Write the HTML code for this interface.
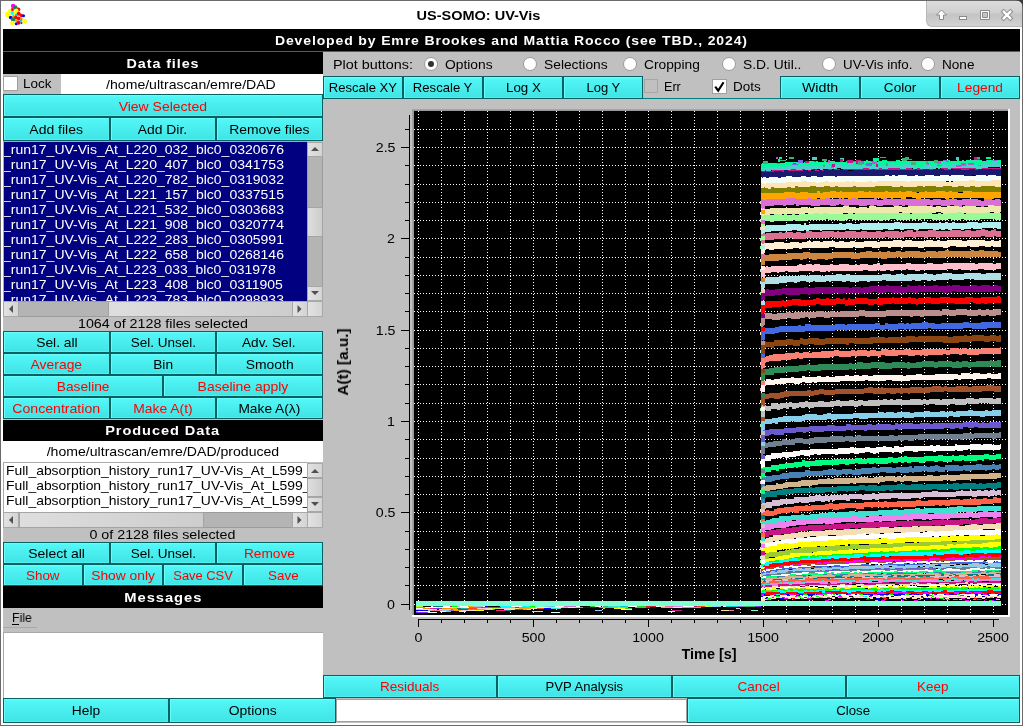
<!DOCTYPE html><html><head><meta charset="utf-8"><style>
html,body{margin:0;padding:0;width:1023px;height:726px;overflow:hidden;background:#c0c0c0}
body>div,body>svg{position:absolute}
.t{position:absolute;white-space:nowrap;line-height:1;will-change:transform;font-family:"Liberation Sans",sans-serif}
.sb{position:absolute;box-sizing:border-box;background:#b4b4b4;border:1px solid #9c9c9c}
.sbb{position:absolute;box-sizing:border-box;background:linear-gradient(90deg,#e2e2e2,#d4d4d4);border:1px solid #a8a8a8}
.sbh{position:absolute;box-sizing:border-box;background:linear-gradient(90deg,#dedede,#cdcdcd);border:1px solid #a4a4a4}
.b{position:absolute;box-sizing:border-box;border:1px solid #066262;border-radius:0;background:linear-gradient(#5cfafa,#52f5f5 12%,#40e5e5 92%);box-shadow:inset 1px 1px 0 #68fdfd,inset -1px -1px 0 #50eeee}
</style></head><body>
<div class="" style="left:0px;top:0px;width:1023px;height:726px;background:#fff"></div>
<div class="" style="left:0px;top:0px;width:1023px;height:1px;background:#6a6a6a"></div>
<div class="" style="left:0px;top:0px;width:1px;height:726px;background:#6a6a6a"></div>
<div class="" style="left:1022px;top:0px;width:1px;height:726px;background:#6a6a6a"></div>
<div class="" style="left:0px;top:725px;width:1023px;height:1px;background:#6a6a6a"></div>
<div class="" style="left:3px;top:29px;width:1017px;height:694px;background:#c0c0c0"></div>
<div class="t" style="left:419.61px;top:9.00px;font-size:13.7px;font-weight:bold;color:#000;transform:scaleX(1.0595);transform-origin:center;letter-spacing:0px;">US-SOMO: UV-Vis</div>
<svg style="left:0;top:0" width="30" height="30"><circle cx="13.1" cy="6.1" r="2.24" fill="#ff00ff"/><circle cx="15.3" cy="7.6" r="2.24" fill="#1f7f4f"/><circle cx="18.3" cy="9.5" r="2.01" fill="#ff0000"/><circle cx="12.2" cy="9.7" r="1.65" fill="#ff0000"/><circle cx="9.9" cy="10.8" r="1.77" fill="#ffff00"/><circle cx="16.5" cy="10.4" r="2.01" fill="#ffff00"/><circle cx="12.4" cy="12.9" r="2.01" fill="#00ffff"/><circle cx="7.9" cy="14.4" r="2.71" fill="#ffff00"/><circle cx="15.4" cy="13.3" r="1.77" fill="#ffff00"/><circle cx="18.7" cy="13.8" r="2.01" fill="#ff0000"/><circle cx="21.4" cy="15.6" r="1.77" fill="#ff0000"/><circle cx="23.5" cy="15.8" r="1.53" fill="#0000ff"/><circle cx="16.3" cy="15.4" r="1.53" fill="#00cccc"/><circle cx="13.5" cy="16.2" r="1.30" fill="#ff8c00"/><circle cx="10.6" cy="17.6" r="1.77" fill="#0000ff"/><circle cx="15.8" cy="17.4" r="1.77" fill="#ff0000"/><circle cx="18.7" cy="18.5" r="2.01" fill="#ff0000"/><circle cx="13.1" cy="19.6" r="2.24" fill="#1f7f4f"/><circle cx="21.5" cy="18.7" r="1.30" fill="#ff8c00"/><circle cx="21" cy="20.6" r="1.30" fill="#00cccc"/><circle cx="24.6" cy="21.5" r="2.48" fill="#ffff00"/><circle cx="16.3" cy="20.6" r="1.30" fill="#ff8c00"/><circle cx="12.4" cy="23.1" r="2.24" fill="#ffff00"/><circle cx="16.3" cy="23.7" r="1.53" fill="#0000ff"/><circle cx="18.5" cy="22.8" r="2.01" fill="#ff0000"/><circle cx="21.4" cy="23.1" r="1.06" fill="#3333ff"/><path d="M0 4 A4 4 0 0 1 4 0 H0Z" fill="#6a6a6a"/></svg>
<div style="left:926px;top:1px;width:96px;height:26px;border-bottom-left-radius:6px;border-top-right-radius:5px;background:linear-gradient(#dcdcdc,#d0d0d0 45%,#c4c4c4 55%,#d2d2d2);border-left:1px solid #b8b8b8;border-bottom:1px solid #b8b8b8;box-sizing:border-box"></div>
<svg style="left:926px;top:0px" width="97" height="28" viewBox="926 0 97 28">
<g fill="#fff" stroke="#8a8a8a" stroke-width="1">
<path d="M941.5 10 L946.5 15 L943.5 15 L943.5 19.5 L939.5 19.5 L939.5 15 L936.5 15 Z"/>
<rect x="959.5" y="16.5" width="7" height="3"/>
<path fill-rule="evenodd" d="M980.5 10.5 H989.5 V19.5 H980.5 Z M982.5 12.5 V17.5 H987.5 V12.5 Z"/>
</g><path d="M1002.2 10.2 L1011.8 19.8 M1011.8 10.2 L1002.2 19.8" stroke="#8a8a8a" stroke-width="4.2"/><path d="M1002.9 10.9 L1011.1 19.1 M1011.1 10.9 L1002.9 19.1" stroke="#fff" stroke-width="2.4"/><g>
</g></svg>
<svg style="left:1015px;top:0" width="8" height="8"><path d="M0 0 H8 V8 A8 8 0 0 0 0 0 Z" fill="#3a3a3a"/></svg>
<div class="" style="left:3px;top:29px;width:1017px;height:22px;background:#000"></div>
<div class="" style="left:3px;top:51px;width:1017px;height:1px;background:#008080"></div>
<div class="t" style="left:291.62px;top:34.00px;font-size:13px;font-weight:bold;color:#fff;transform:scaleX(1.0777);transform-origin:center;letter-spacing:0.8px;">Developed by Emre Brookes and Mattia Rocco (see TBD., 2024)</div>
<div class="" style="left:3px;top:52px;width:320px;height:22px;background:#000"></div>
<div class="t" style="left:130.99px;top:57.83px;font-size:12.6px;font-weight:bold;color:#fff;transform:scaleX(1.1388);transform-origin:center;letter-spacing:0.8px;">Data files</div>
<div class="" style="left:3px;top:76px;width:15px;height:15px;background:#fff;border:1px solid #a0a0a0;box-sizing:border-box"></div>
<div class="t" style="left:23.00px;top:78.33px;font-size:12.6px;color:#000;transform:scaleX(1.0723);transform-origin:left;letter-spacing:0px;">Lock</div>
<div class="" style="left:61px;top:74px;width:262px;height:20px;background:#fff"></div>
<div class="t" style="left:115.02px;top:79.33px;font-size:12.6px;color:#000;transform:scaleX(1.1171);transform-origin:center;letter-spacing:0px;">/home/ultrascan/emre/DAD</div>
<div class="b" style="left:3px;top:94px;width:320px;height:23px"></div>
<div class="t" style="left:123.08px;top:101.33px;font-size:12.6px;color:#ff0000;transform:scaleX(1.1096);transform-origin:center;letter-spacing:0px;">View Selected</div>
<div class="b" style="left:3px;top:117px;width:107px;height:24px"></div>
<div class="t" style="left:32.34px;top:123.83px;font-size:12.6px;color:#000;transform:scaleX(1.1091);transform-origin:center;letter-spacing:0px;">Add files</div>
<div class="b" style="left:110px;top:117px;width:106px;height:24px"></div>
<div class="t" style="left:140.24px;top:123.83px;font-size:12.6px;color:#000;transform:scaleX(1.1047);transform-origin:center;letter-spacing:0px;">Add Dir.</div>
<div class="b" style="left:216px;top:117px;width:107px;height:24px"></div>
<div class="t" style="left:233.09px;top:123.83px;font-size:12.6px;color:#000;transform:scaleX(1.1025);transform-origin:center;letter-spacing:0px;">Remove files</div>
<div class="" style="left:3px;top:141px;width:320px;height:176px;background:#c0c0c0"></div>
<div class="" style="left:3px;top:141px;width:304px;height:160px;background:#000080;border-top:1px solid #a8a8a8;border-left:1px solid #a8a8a8;box-sizing:border-box"></div>
<div style="left:4px;top:142px;width:303px;height:159px;overflow:hidden">
<div class="t" style="left:-8.20px;top:2.33px;font-size:12.6px;color:#fff;transform:scaleX(1.1123);transform-origin:left;letter-spacing:0px;">y_run17_UV-Vis_At_L220_032_blc0_0320676</div>
<div class="t" style="left:-8.20px;top:17.33px;font-size:12.6px;color:#fff;transform:scaleX(1.1123);transform-origin:left;letter-spacing:0px;">y_run17_UV-Vis_At_L220_407_blc0_0341753</div>
<div class="t" style="left:-8.20px;top:32.33px;font-size:12.6px;color:#fff;transform:scaleX(1.1123);transform-origin:left;letter-spacing:0px;">y_run17_UV-Vis_At_L220_782_blc0_0319032</div>
<div class="t" style="left:-8.20px;top:47.33px;font-size:12.6px;color:#fff;transform:scaleX(1.1123);transform-origin:left;letter-spacing:0px;">y_run17_UV-Vis_At_L221_157_blc0_0337515</div>
<div class="t" style="left:-8.20px;top:62.33px;font-size:12.6px;color:#fff;transform:scaleX(1.1123);transform-origin:left;letter-spacing:0px;">y_run17_UV-Vis_At_L221_532_blc0_0303683</div>
<div class="t" style="left:-8.20px;top:77.33px;font-size:12.6px;color:#fff;transform:scaleX(1.1123);transform-origin:left;letter-spacing:0px;">y_run17_UV-Vis_At_L221_908_blc0_0320774</div>
<div class="t" style="left:-8.20px;top:92.33px;font-size:12.6px;color:#fff;transform:scaleX(1.1123);transform-origin:left;letter-spacing:0px;">y_run17_UV-Vis_At_L222_283_blc0_0305991</div>
<div class="t" style="left:-8.20px;top:107.33px;font-size:12.6px;color:#fff;transform:scaleX(1.1123);transform-origin:left;letter-spacing:0px;">y_run17_UV-Vis_At_L222_658_blc0_0268146</div>
<div class="t" style="left:-8.20px;top:122.33px;font-size:12.6px;color:#fff;transform:scaleX(1.1105);transform-origin:left;letter-spacing:0px;">y_run17_UV-Vis_At_L223_033_blc0_031978</div>
<div class="t" style="left:-8.20px;top:137.33px;font-size:12.6px;color:#fff;transform:scaleX(1.1123);transform-origin:left;letter-spacing:0px;">y_run17_UV-Vis_At_L223_408_blc0_0311905</div>
<div class="t" style="left:-8.20px;top:152.33px;font-size:12.6px;color:#fff;transform:scaleX(1.1123);transform-origin:left;letter-spacing:0px;">y_run17_UV-Vis_At_L223_783_blc0_0298933</div>
</div>
<div class="sb" style="left:307px;top:142px;width:16px;height:159px"></div>
<div class="sbb" style="left:307px;top:142px;width:16px;height:15px"></div>
<div class="sbb" style="left:307px;top:286px;width:16px;height:15px"></div>
<div class="sbh" style="left:307px;top:207px;width:16px;height:30px"></div>
<svg style="left:307px;top:142px" width="16" height="159"><path d="M4 9 L8 5 L12 9 Z" fill="#505050"/><path d="M4 149 L8 153 L12 149 Z" fill="#505050"/></svg>
<div class="sb" style="left:3px;top:301px;width:304px;height:16px"></div>
<div class="sbb" style="left:3px;top:301px;width:16px;height:16px"></div>
<div class="sbh" style="left:108px;top:301px;width:185px;height:16px"></div>
<div class="sbb" style="left:292px;top:301px;width:16px;height:16px"></div>
<div class="sbb" style="left:307px;top:301px;width:16px;height:16px"></div>
<svg style="left:3px;top:301px" width="305" height="16"><path d="M10 4 L6 8 L10 12 Z" fill="#505050"/><path d="M294.5 4 L298.5 8 L294.5 12 Z" fill="#505050"/></svg>
<div class="t" style="left:87.55px;top:318.33px;font-size:12.6px;color:#000;transform:scaleX(1.1340);transform-origin:center;letter-spacing:0px;">1064 of 2128 files selected</div>
<div class="b" style="left:3px;top:331px;width:107px;height:22px"></div>
<div class="t" style="left:37.59px;top:336.83px;font-size:12.6px;color:#000;transform:scaleX(1.0943);transform-origin:center;letter-spacing:0px;">Sel. all</div>
<div class="b" style="left:110px;top:331px;width:106px;height:22px"></div>
<div class="t" style="left:132.54px;top:336.83px;font-size:12.6px;color:#000;transform:scaleX(1.0725);transform-origin:center;letter-spacing:0px;">Sel. Unsel.</div>
<div class="b" style="left:216px;top:331px;width:107px;height:22px"></div>
<div class="t" style="left:244.29px;top:336.83px;font-size:12.6px;color:#000;transform:scaleX(1.0818);transform-origin:center;letter-spacing:0px;">Adv. Sel.</div>
<div class="b" style="left:3px;top:353px;width:107px;height:22px"></div>
<div class="t" style="left:33.03px;top:358.83px;font-size:12.6px;color:#ff0000;transform:scaleX(1.1023);transform-origin:center;letter-spacing:0px;">Average</div>
<div class="b" style="left:110px;top:353px;width:106px;height:22px"></div>
<div class="t" style="left:153.89px;top:358.83px;font-size:12.6px;color:#000;transform:scaleX(1.0896);transform-origin:center;letter-spacing:0px;">Bin</div>
<div class="b" style="left:216px;top:353px;width:107px;height:22px"></div>
<div class="t" style="left:247.79px;top:358.83px;font-size:12.6px;color:#000;transform:scaleX(1.1036);transform-origin:center;letter-spacing:0px;">Smooth</div>
<div class="b" style="left:3px;top:375px;width:160px;height:22px"></div>
<div class="t" style="left:58.83px;top:380.83px;font-size:12.6px;color:#ff0000;transform:scaleX(1.0895);transform-origin:center;letter-spacing:0px;">Baseline</div>
<div class="b" style="left:163px;top:375px;width:160px;height:22px"></div>
<div class="t" style="left:202.02px;top:380.83px;font-size:12.6px;color:#ff0000;transform:scaleX(1.1077);transform-origin:center;letter-spacing:0px;">Baseline apply</div>
<div class="b" style="left:3px;top:397px;width:107px;height:22px"></div>
<div class="t" style="left:17.28px;top:402.83px;font-size:12.6px;color:#ff0000;transform:scaleX(1.1200);transform-origin:center;letter-spacing:0px;">Concentration</div>
<div class="b" style="left:110px;top:397px;width:106px;height:22px"></div>
<div class="t" style="left:135.70px;top:402.83px;font-size:12.6px;color:#ff0000;transform:scaleX(1.1018);transform-origin:center;letter-spacing:0px;">Make A(t)</div>
<div class="b" style="left:216px;top:397px;width:107px;height:22px"></div>
<div class="t" style="left:240.80px;top:402.83px;font-size:12.6px;color:#000;transform:scaleX(1.0912);transform-origin:center;letter-spacing:0px;">Make A(λ)</div>
<div class="" style="left:3px;top:420px;width:320px;height:21px;background:#000"></div>
<div class="t" style="left:113.34px;top:425.33px;font-size:12.6px;font-weight:bold;color:#fff;transform:scaleX(1.1571);transform-origin:center;letter-spacing:0.8px;">Produced Data</div>
<div class="" style="left:3px;top:441px;width:320px;height:21px;background:#fff"></div>
<div class="t" style="left:59.00px;top:446.33px;font-size:12.6px;color:#000;transform:scaleX(1.1184);transform-origin:center;letter-spacing:0px;">/home/ultrascan/emre/DAD/produced</div>
<div class="" style="left:3px;top:462px;width:320px;height:65px;background:#c0c0c0"></div>
<div class="" style="left:3px;top:462px;width:304px;height:50px;background:#fff;border-top:1px solid #a8a8a8;border-left:1px solid #a8a8a8;box-sizing:border-box"></div>
<div style="left:4px;top:463px;width:303px;height:49px;overflow:hidden">
<div class="t" style="left:2.20px;top:2.33px;font-size:12.6px;color:#000;transform:scaleX(1.1045);transform-origin:left;letter-spacing:0px;">Full_absorption_history_run17_UV-Vis_At_L599_</div>
<div class="t" style="left:2.20px;top:17.33px;font-size:12.6px;color:#000;transform:scaleX(1.1045);transform-origin:left;letter-spacing:0px;">Full_absorption_history_run17_UV-Vis_At_L599_</div>
<div class="t" style="left:2.20px;top:32.33px;font-size:12.6px;color:#000;transform:scaleX(1.1045);transform-origin:left;letter-spacing:0px;">Full_absorption_history_run17_UV-Vis_At_L599_</div>
</div>
<div class="sb" style="left:307px;top:463px;width:16px;height:49px"></div>
<div class="sbb" style="left:307px;top:463px;width:16px;height:15px"></div>
<div class="sbb" style="left:307px;top:497px;width:16px;height:15px"></div>
<div class="sbh" style="left:307px;top:478px;width:16px;height:19px"></div>
<svg style="left:307px;top:463px" width="16" height="49"><path d="M4 10 L8 6 L12 10 Z" fill="#505050"/><path d="M4 39 L8 43 L12 39 Z" fill="#505050"/></svg>
<div class="sb" style="left:3px;top:512px;width:304px;height:16px"></div>
<div class="sbb" style="left:3px;top:512px;width:16px;height:16px"></div>
<div class="sbh" style="left:19px;top:512px;width:185px;height:16px"></div>
<div class="sbb" style="left:292px;top:512px;width:16px;height:16px"></div>
<div class="sbb" style="left:307px;top:512px;width:16px;height:16px"></div>
<svg style="left:3px;top:512px" width="305" height="16"><path d="M10 4 L6 8 L10 12 Z" fill="#505050"/><path d="M294.5 4 L298.5 8 L294.5 12 Z" fill="#505050"/></svg>
<div class="t" style="left:98.06px;top:529.33px;font-size:12.6px;color:#000;transform:scaleX(1.1328);transform-origin:center;letter-spacing:0px;">0 of 2128 files selected</div>
<div class="b" style="left:3px;top:542px;width:107px;height:22px"></div>
<div class="t" style="left:30.94px;top:547.83px;font-size:12.6px;color:#000;transform:scaleX(1.1105);transform-origin:center;letter-spacing:0px;">Select all</div>
<div class="b" style="left:110px;top:542px;width:106px;height:22px"></div>
<div class="t" style="left:132.54px;top:547.83px;font-size:12.6px;color:#000;transform:scaleX(1.0725);transform-origin:center;letter-spacing:0px;">Sel. Unsel.</div>
<div class="b" style="left:216px;top:542px;width:107px;height:22px"></div>
<div class="t" style="left:246.04px;top:547.83px;font-size:12.6px;color:#ff0000;transform:scaleX(1.0861);transform-origin:center;letter-spacing:0px;">Remove</div>
<div class="b" style="left:3px;top:564px;width:80px;height:22px"></div>
<div class="t" style="left:27.24px;top:569.83px;font-size:12.6px;color:#ff0000;transform:scaleX(1.0633);transform-origin:center;letter-spacing:0px;">Show</div>
<div class="b" style="left:83px;top:564px;width:80px;height:22px"></div>
<div class="t" style="left:93.93px;top:569.83px;font-size:12.6px;color:#ff0000;transform:scaleX(1.0963);transform-origin:center;letter-spacing:0px;">Show only</div>
<div class="b" style="left:163px;top:564px;width:80px;height:22px"></div>
<div class="t" style="left:173.94px;top:569.83px;font-size:12.6px;color:#ff0000;transform:scaleX(1.0234);transform-origin:center;letter-spacing:0px;">Save CSV</div>
<div class="b" style="left:243px;top:564px;width:80px;height:22px"></div>
<div class="t" style="left:268.64px;top:569.83px;font-size:12.6px;color:#ff0000;transform:scaleX(1.0615);transform-origin:center;letter-spacing:0px;">Save</div>
<div class="" style="left:3px;top:586px;width:320px;height:22px;background:#000"></div>
<div class="t" style="left:129.68px;top:591.83px;font-size:12.6px;font-weight:bold;color:#fff;transform:scaleX(1.1695);transform-origin:center;letter-spacing:0.8px;">Messages</div>
<div class="t" style="left:12.30px;top:612.33px;font-size:12.6px;color:#000;transform:scaleX(0.9752);transform-origin:left;letter-spacing:0px;">File</div>
<div class="" style="left:12px;top:624px;width:7px;height:1px;background:#000"></div>
<div class="" style="left:3px;top:627px;width:34px;height:1px;background:#a9a9a9"></div>
<div class="" style="left:3px;top:632px;width:320px;height:66px;background:#fff;border:1px solid #a8a8a8;border-right:none;border-bottom:none;box-sizing:border-box"></div>
<div class="b" style="left:3px;top:698px;width:166px;height:25px"></div>
<div class="t" style="left:73.04px;top:705.33px;font-size:12.6px;color:#000;transform:scaleX(1.0927);transform-origin:center;letter-spacing:0px;">Help</div>
<div class="b" style="left:169px;top:698px;width:167px;height:25px"></div>
<div class="t" style="left:230.79px;top:705.33px;font-size:12.6px;color:#000;transform:scaleX(1.1036);transform-origin:center;letter-spacing:0px;">Options</div>
<div class="" style="left:336px;top:699px;width:351px;height:23px;background:#fff;border:1px solid #a0a0a0;box-sizing:border-box"></div>
<div class="b" style="left:687px;top:698px;width:333px;height:25px"></div>
<div class="t" style="left:837.39px;top:705.33px;font-size:12.6px;color:#000;transform:scaleX(1.0503);transform-origin:center;letter-spacing:0px;">Close</div>
<div class="t" style="left:332.50px;top:59.33px;font-size:12.6px;color:#000;transform:scaleX(1.1421);transform-origin:left;letter-spacing:0px;">Plot buttons:</div>
<svg style="left:422.5px;top:56px" width="16" height="16"><circle cx="8" cy="8" r="6.5" fill="#fff" stroke="#9a9a9a" stroke-width="1"/><circle cx="8" cy="8" r="3" fill="#333"/></svg>
<div class="t" style="left:445.00px;top:59.33px;font-size:12.6px;color:#000;transform:scaleX(1.0962);transform-origin:left;letter-spacing:0px;">Options</div>
<svg style="left:522px;top:56px" width="16" height="16"><circle cx="8" cy="8" r="6.5" fill="#fff" stroke="#9a9a9a" stroke-width="1"/></svg>
<div class="t" style="left:544.00px;top:59.33px;font-size:12.6px;color:#000;transform:scaleX(1.0959);transform-origin:left;letter-spacing:0px;">Selections</div>
<svg style="left:621.5px;top:56px" width="16" height="16"><circle cx="8" cy="8" r="6.5" fill="#fff" stroke="#9a9a9a" stroke-width="1"/></svg>
<div class="t" style="left:643.50px;top:59.33px;font-size:12.6px;color:#000;transform:scaleX(1.0932);transform-origin:left;letter-spacing:0px;">Cropping</div>
<svg style="left:720.5px;top:56px" width="16" height="16"><circle cx="8" cy="8" r="6.5" fill="#fff" stroke="#9a9a9a" stroke-width="1"/></svg>
<div class="t" style="left:743.00px;top:59.33px;font-size:12.6px;color:#000;transform:scaleX(1.0995);transform-origin:left;letter-spacing:0px;">S.D. Util..</div>
<svg style="left:820.5px;top:56px" width="16" height="16"><circle cx="8" cy="8" r="6.5" fill="#fff" stroke="#9a9a9a" stroke-width="1"/></svg>
<div class="t" style="left:842.60px;top:59.33px;font-size:12.6px;color:#000;transform:scaleX(1.0583);transform-origin:left;letter-spacing:0px;">UV-Vis info.</div>
<svg style="left:919.5px;top:56px" width="16" height="16"><circle cx="8" cy="8" r="6.5" fill="#fff" stroke="#9a9a9a" stroke-width="1"/></svg>
<div class="t" style="left:941.50px;top:59.33px;font-size:12.6px;color:#000;transform:scaleX(1.0790);transform-origin:left;letter-spacing:0px;">None</div>
<div class="b" style="left:323px;top:76px;width:80px;height:23px"></div>
<div class="t" style="left:330.08px;top:82.33px;font-size:12.6px;color:#000;transform:scaleX(1.0378);transform-origin:center;letter-spacing:0px;">Rescale XY</div>
<div class="b" style="left:403px;top:76px;width:80px;height:23px"></div>
<div class="t" style="left:414.29px;top:82.33px;font-size:12.6px;color:#000;transform:scaleX(1.0415);transform-origin:center;letter-spacing:0px;">Rescale Y</div>
<div class="b" style="left:483px;top:76px;width:80px;height:23px"></div>
<div class="t" style="left:506.54px;top:82.33px;font-size:12.6px;color:#000;transform:scaleX(1.0586);transform-origin:center;letter-spacing:0px;">Log X</div>
<div class="b" style="left:563px;top:76px;width:80px;height:23px"></div>
<div class="t" style="left:586.54px;top:82.33px;font-size:12.6px;color:#000;transform:scaleX(1.0307);transform-origin:center;letter-spacing:0px;">Log Y</div>
<div class="" style="left:644px;top:79px;width:14px;height:14px;background:#c0c0c0;border:1px solid #a6a6a6;box-sizing:border-box"></div>
<div class="t" style="left:663.50px;top:81.33px;font-size:12.6px;color:#000;transform:scaleX(0.9824);transform-origin:left;letter-spacing:0px;">Err</div>
<div class="" style="left:712px;top:79px;width:15px;height:15px;background:#fff;border:1px solid #a0a0a0;box-sizing:border-box"></div>
<svg style="left:712px;top:79px" width="15" height="15"><path d="M3.2 7.6 L6.2 11.6 L11.6 3.2" fill="none" stroke="#000" stroke-width="2.1"/></svg>
<div class="t" style="left:732.50px;top:81.33px;font-size:12.6px;color:#000;transform:scaleX(1.0692);transform-origin:left;letter-spacing:0px;">Dots</div>
<div class="" style="left:643px;top:98px;width:137px;height:1px;background:#008080"></div>
<div class="b" style="left:780px;top:76px;width:80px;height:23px"></div>
<div class="t" style="left:803.90px;top:82.33px;font-size:12.6px;color:#000;transform:scaleX(1.1288);transform-origin:center;letter-spacing:0px;">Width</div>
<div class="b" style="left:860px;top:76px;width:80px;height:23px"></div>
<div class="t" style="left:884.95px;top:82.33px;font-size:12.6px;color:#000;transform:scaleX(1.0770);transform-origin:center;letter-spacing:0px;">Color</div>
<div class="b" style="left:940px;top:76px;width:80px;height:23px"></div>
<div class="t" style="left:958.98px;top:82.33px;font-size:12.6px;color:#ff0000;transform:scaleX(1.0903);transform-origin:center;letter-spacing:0px;">Legend</div>
<div class="b" style="left:323px;top:675px;width:174px;height:23px"></div>
<div class="t" style="left:382.34px;top:681.33px;font-size:12.6px;color:#ff0000;transform:scaleX(1.0750);transform-origin:center;letter-spacing:0px;">Residuals</div>
<div class="b" style="left:497px;top:675px;width:175px;height:23px"></div>
<div class="t" style="left:546.68px;top:681.33px;font-size:12.6px;color:#000;transform:scaleX(1.0392);transform-origin:center;letter-spacing:0px;">PVP Analysis</div>
<div class="b" style="left:672px;top:675px;width:174px;height:23px"></div>
<div class="t" style="left:739.39px;top:681.33px;font-size:12.6px;color:#ff0000;transform:scaleX(1.0728);transform-origin:center;letter-spacing:0px;">Cancel</div>
<div class="b" style="left:846px;top:675px;width:174px;height:23px"></div>
<div class="t" style="left:918.29px;top:681.33px;font-size:12.6px;color:#ff0000;transform:scaleX(1.0640);transform-origin:center;letter-spacing:0px;">Keep</div>
<svg style="left:0;top:0" width="1023" height="726"><defs><clipPath id="cv"><rect x="414" y="111" width="594" height="504"/></clipPath></defs><rect x="412" y="109" width="598" height="508" fill="#fff"/><rect x="412" y="109" width="596" height="506" fill="#a4a4a4"/><rect x="413" y="110" width="595" height="505" fill="#989898"/><rect x="414" y="111" width="594" height="504" fill="#000"/><path d="M418.5 111V615M441.5 111V615M464.5 111V615M487.5 111V615M510.5 111V615M533.5 111V615M556.5 111V615M579.5 111V615M602.5 111V615M625.5 111V615M648.5 111V615M671.5 111V615M694.5 111V615M717.5 111V615M740.5 111V615M763.5 111V615M786.5 111V615M809.5 111V615M832.5 111V615M855.5 111V615M878.5 111V615M901.5 111V615M924.5 111V615M947.5 111V615M970.5 111V615M993.5 111V615M414 604.5H1008M414 585.5H1008M414 567.5H1008M414 549.5H1008M414 531.5H1008M414 512.5H1008M414 494.5H1008M414 476.5H1008M414 458.5H1008M414 439.5H1008M414 421.5H1008M414 403.5H1008M414 384.5H1008M414 366.5H1008M414 348.5H1008M414 330.5H1008M414 311.5H1008M414 293.5H1008M414 275.5H1008M414 257.5H1008M414 238.5H1008M414 220.5H1008M414 202.5H1008M414 184.5H1008M414 165.5H1008M414 147.5H1008M414 129.5H1008" stroke="#fff" stroke-width="1" stroke-dasharray="1 2" shape-rendering="crispEdges"/><g clip-path="url(#cv)"><rect x="416" y="606" width="7" height="1" fill="#adff2f"/><rect x="431" y="606" width="2" height="1" fill="#ffffff"/><rect x="433" y="606" width="10" height="1" fill="#008080"/><rect x="443" y="606" width="7" height="1" fill="#ffffff"/><rect x="450" y="606" width="2" height="1" fill="#c71585"/><rect x="452" y="606" width="5" height="1" fill="#00ff00"/><rect x="457" y="606" width="3" height="1" fill="#b0c4de"/><rect x="460" y="606" width="8" height="1" fill="#ffffff"/><rect x="468" y="606" width="5" height="1" fill="#ffa500"/><rect x="473" y="606" width="10" height="1" fill="#b0c4de"/><rect x="483" y="606" width="2" height="1" fill="#ffffff"/><rect x="485" y="606" width="3" height="1" fill="#0000ff"/><rect x="500" y="606" width="11" height="1" fill="#00ffff"/><rect x="511" y="606" width="11" height="1" fill="#ffffff"/><rect x="522" y="606" width="8" height="1" fill="#00ffff"/><rect x="530" y="606" width="5" height="1" fill="#00ff00"/><rect x="535" y="606" width="10" height="1" fill="#7fffd4"/><rect x="545" y="606" width="6" height="1" fill="#87cefa"/><rect x="551" y="606" width="4" height="1" fill="#40e0d0"/><rect x="555" y="606" width="3" height="1" fill="#ffffff"/><rect x="558" y="606" width="6" height="1" fill="#ffe4e1"/><rect x="564" y="606" width="12" height="1" fill="#da70d6"/><rect x="576" y="606" width="3" height="1" fill="#ffffff"/><rect x="590" y="606" width="5" height="1" fill="#32cd32"/><rect x="595" y="606" width="3" height="1" fill="#ffe4e1"/><rect x="598" y="606" width="3" height="1" fill="#ffffff"/><rect x="603" y="606" width="5" height="1" fill="#3cb371"/><rect x="608" y="606" width="12" height="1" fill="#40e0d0"/><rect x="620" y="606" width="8" height="1" fill="#00ced1"/><rect x="628" y="606" width="9" height="1" fill="#ffffff"/><rect x="637" y="606" width="9" height="1" fill="#32cd32"/><rect x="646" y="606" width="6" height="1" fill="#dc143c"/><rect x="652" y="606" width="4" height="1" fill="#dc143c"/><rect x="656" y="606" width="3" height="1" fill="#ffffff"/><rect x="659" y="606" width="6" height="1" fill="#f5deb3"/><rect x="665" y="606" width="9" height="1" fill="#ff69b4"/><rect x="674" y="606" width="9" height="1" fill="#ee82ee"/><rect x="683" y="606" width="11" height="1" fill="#ffffff"/><rect x="694" y="606" width="3" height="1" fill="#c71585"/><rect x="697" y="606" width="8" height="1" fill="#ff4500"/><rect x="705" y="606" width="7" height="1" fill="#adff2f"/><rect x="712" y="606" width="9" height="1" fill="#87cefa"/><rect x="723" y="606" width="3" height="1" fill="#ffe4e1"/><rect x="726" y="606" width="11" height="1" fill="#00ced1"/><rect x="737" y="606" width="7" height="1" fill="#9370db"/><rect x="744" y="606" width="11" height="1" fill="#3cb371"/><rect x="755" y="606" width="6" height="1" fill="#8a2be2"/><rect x="416" y="607" width="3" height="1" fill="#ffa500"/><rect x="419" y="607" width="6" height="1" fill="#ff8c00"/><rect x="425" y="607" width="12" height="1" fill="#ffffff"/><rect x="437" y="607" width="2" height="1" fill="#f0e68c"/><rect x="439" y="607" width="12" height="1" fill="#ffffff"/><rect x="451" y="607" width="12" height="1" fill="#ffff00"/><rect x="463" y="607" width="6" height="1" fill="#e0ffff"/><rect x="469" y="607" width="12" height="1" fill="#9370db"/><rect x="481" y="607" width="2" height="1" fill="#8a2be2"/><rect x="483" y="607" width="7" height="1" fill="#ff4500"/><rect x="490" y="607" width="11" height="1" fill="#ff1493"/><rect x="501" y="607" width="9" height="1" fill="#00ffff"/><rect x="510" y="607" width="5" height="1" fill="#ee82ee"/><rect x="515" y="607" width="4" height="1" fill="#dc143c"/><rect x="519" y="607" width="8" height="1" fill="#fa8072"/><rect x="527" y="607" width="9" height="1" fill="#ffa500"/><rect x="536" y="607" width="4" height="1" fill="#ffff00"/><rect x="540" y="607" width="8" height="1" fill="#ffe4e1"/><rect x="548" y="607" width="6" height="1" fill="#7fffd4"/><rect x="554" y="607" width="8" height="1" fill="#ffe4e1"/><rect x="562" y="607" width="6" height="1" fill="#87cefa"/><rect x="568" y="607" width="7" height="1" fill="#e0ffff"/><rect x="575" y="607" width="5" height="1" fill="#adff2f"/><rect x="580" y="607" width="3" height="1" fill="#da70d6"/><rect x="583" y="607" width="4" height="1" fill="#0000ff"/><rect x="587" y="607" width="12" height="1" fill="#0000ff"/><rect x="599" y="607" width="2" height="1" fill="#3cb371"/><rect x="601" y="607" width="11" height="1" fill="#da70d6"/><rect x="612" y="607" width="6" height="1" fill="#ee82ee"/><rect x="618" y="607" width="2" height="1" fill="#adff2f"/><rect x="620" y="607" width="8" height="1" fill="#40e0d0"/><rect x="635" y="607" width="11" height="1" fill="#00ced1"/><rect x="646" y="607" width="4" height="1" fill="#c71585"/><rect x="661" y="607" width="12" height="1" fill="#00ffff"/><rect x="673" y="607" width="9" height="1" fill="#ffe4e1"/><rect x="682" y="607" width="8" height="1" fill="#fa8072"/><rect x="690" y="607" width="8" height="1" fill="#fa8072"/><rect x="698" y="607" width="3" height="1" fill="#ff8c00"/><rect x="416" y="608" width="7" height="1" fill="#ffffff"/><rect x="423" y="608" width="7" height="1" fill="#ff8c00"/><rect x="430" y="608" width="3" height="1" fill="#ff1493"/><rect x="433" y="608" width="9" height="1" fill="#8a2be2"/><rect x="442" y="608" width="9" height="1" fill="#ff8c00"/><rect x="451" y="608" width="6" height="1" fill="#ffa500"/><rect x="457" y="608" width="4" height="1" fill="#008080"/><rect x="461" y="608" width="7" height="1" fill="#20b2aa"/><rect x="468" y="608" width="9" height="1" fill="#ff4500"/><rect x="477" y="608" width="10" height="1" fill="#ffc0cb"/><rect x="487" y="608" width="5" height="1" fill="#f5deb3"/><rect x="492" y="608" width="7" height="1" fill="#adff2f"/><rect x="499" y="608" width="10" height="1" fill="#ffc0cb"/><rect x="509" y="608" width="10" height="1" fill="#f0e68c"/><rect x="519" y="608" width="12" height="1" fill="#ffa500"/><rect x="531" y="608" width="6" height="1" fill="#f5deb3"/><rect x="537" y="608" width="7" height="1" fill="#ff4500"/><rect x="544" y="608" width="7" height="1" fill="#0000ff"/><rect x="551" y="608" width="10" height="1" fill="#40e0d0"/><rect x="603" y="608" width="2" height="1" fill="#ffd700"/><rect x="614" y="608" width="11" height="1" fill="#ffff00"/><rect x="625" y="608" width="7" height="1" fill="#32cd32"/><rect x="736" y="608" width="4" height="1" fill="#ffc0cb"/><rect x="416" y="609" width="7" height="1" fill="#adff2f"/><rect x="423" y="609" width="10" height="1" fill="#ffe4e1"/><rect x="433" y="609" width="4" height="1" fill="#ffc0cb"/><rect x="439" y="609" width="3" height="1" fill="#f5deb3"/><rect x="442" y="609" width="4" height="1" fill="#b0c4de"/><rect x="446" y="609" width="5" height="1" fill="#98fb98"/><rect x="451" y="609" width="2" height="1" fill="#20b2aa"/><rect x="453" y="609" width="5" height="1" fill="#ee82ee"/><rect x="458" y="609" width="10" height="1" fill="#dc143c"/><rect x="468" y="609" width="11" height="1" fill="#00ced1"/><rect x="479" y="609" width="6" height="1" fill="#40e0d0"/><rect x="485" y="609" width="8" height="1" fill="#7fffd4"/><rect x="493" y="609" width="2" height="1" fill="#9370db"/><rect x="504" y="609" width="11" height="1" fill="#f5deb3"/><rect x="515" y="609" width="8" height="1" fill="#c71585"/><rect x="523" y="609" width="4" height="1" fill="#40e0d0"/><rect x="527" y="609" width="4" height="1" fill="#f5deb3"/><rect x="621" y="609" width="11" height="1" fill="#ffffff"/><rect x="747" y="609" width="4" height="1" fill="#0000ff"/><rect x="416" y="610" width="12" height="1" fill="#0000ff"/><rect x="428" y="610" width="4" height="1" fill="#b0c4de"/><rect x="432" y="610" width="10" height="1" fill="#fa8072"/><rect x="442" y="610" width="7" height="1" fill="#87cefa"/><rect x="449" y="610" width="5" height="1" fill="#9370db"/><rect x="454" y="610" width="7" height="1" fill="#ffa500"/><rect x="461" y="610" width="7" height="1" fill="#ffc0cb"/><rect x="468" y="610" width="7" height="1" fill="#ffe4e1"/><rect x="475" y="610" width="9" height="1" fill="#ffff00"/><rect x="496" y="610" width="10" height="1" fill="#ff1493"/><rect x="506" y="610" width="5" height="1" fill="#008080"/><rect x="595" y="610" width="7" height="1" fill="#87cefa"/><rect x="672" y="610" width="10" height="1" fill="#c71585"/><rect x="721" y="610" width="8" height="1" fill="#f0e68c"/><rect x="729" y="610" width="5" height="1" fill="#ff69b4"/><rect x="751" y="610" width="7" height="1" fill="#7fffd4"/><rect x="416" y="611" width="2" height="1" fill="#ffa500"/><rect x="418" y="611" width="12" height="1" fill="#e0ffff"/><rect x="440" y="611" width="6" height="1" fill="#ffffff"/><rect x="446" y="611" width="5" height="1" fill="#ee82ee"/><rect x="459" y="611" width="7" height="1" fill="#ffe4e1"/><rect x="532" y="611" width="11" height="1" fill="#adff2f"/><rect x="668" y="611" width="7" height="1" fill="#e0ffff"/><rect x="416" y="612" width="12" height="1" fill="#8a2be2"/><rect x="428" y="612" width="9" height="1" fill="#e0ffff"/><rect x="551" y="612" width="9" height="1" fill="#e0ffff"/><path d="M761 165H762V164H763V164H764V164H765V164H766V164H772V164H774V163H776V164H782V163H786V164H790V162H795V163H798V163H804V163H807V163H811V163H813V162H818V162H821V162H824V162H828V163H832V163H835V162H838V162H841V162H844V163H850V161H856V162H862V162H865V162H869V161H875V162H878V161H881V162H885V161H890V161H896V162H900V162H902V161H905V162H911V161H914V161H916V162H919V162H924V162H928V161H933V162H936V162H940V162H943V160H947V161H951V161H954V161H959V161H962V162H965V161H967V161H970V161H973V161H978V162H980V161H983V161H986V160H989V160H992V161H997V162H1000V160H1001V162H1000V163H997V163H992V162H989V163H986V163H983V163H980V164H978V163H973V163H970V163H967V164H965V164H962V163H959V164H954V163H951V163H947V163H943V163H940V164H936V164H933V163H928V164H924V164H919V163H916V163H914V163H911V164H905V164H902V164H900V164H896V163H890V164H885V164H881V163H878V164H875V164H869V165H865V164H862V164H856V163H850V164H844V164H841V164H838V164H835V164H832V164H828V164H824V164H821V164H818V164H813V164H811V165H807V164H804V165H798V165H795V164H790V166H786V165H782V166H776V165H774V166H772V166H766V166H765V170H764V170H763V170H762V171H761Z" fill="#7b68ee" shape-rendering="crispEdges"/><path d="M761 164H762V163H763V163H764V163H765V164H766V163H772V163H776V163H779V163H782V163H785V162H789V162H793V162H798V163H804V162H807V161H813V161H818V162H824V161H826V162H829V161H832V161H835V162H840V161H843V162H846V161H849V162H855V162H858V161H861V161H865V161H868V161H871V162H874V161H877V162H880V161H883V161H888V161H891V161H894V162H896V160H900V161H903V160H906V161H911V161H916V161H919V161H925V161H927V161H933V161H937V161H939V161H941V161H943V161H947V160H950V161H954V161H957V160H959V161H962V161H965V161H967V160H969V160H972V160H977V160H982V161H985V161H987V160H990V160H995V160H998V160H1001V166H998V166H995V166H990V167H987V167H985V168H982V166H977V167H972V166H969V167H967V167H965V167H962V168H959V168H957V167H954V167H950V167H947V167H943V167H941V167H939V167H937V168H933V168H927V167H925V167H919V167H916V168H911V167H906V167H903V168H900V167H896V168H894V168H891V167H888V167H883V167H880V168H877V167H874V168H871V168H868V168H865V167H861V167H858V168H855V168H849V168H846V168H843V167H840V168H835V167H832V167H829V168H826V168H824V168H818V168H813V168H807V169H804V169H798V169H793V169H789V169H785V169H782V169H779V169H776V169H772V170H766V170H765V173H764V174H763V174H762V174H761Z" fill="#00fa9a" shape-rendering="crispEdges"/><path d="M761 168H762V167H763V168H764V167H765V167H766V167H771V167H774V167H779V166H782V167H786V166H791V166H794V166H799V165H802V165H805V166H808V166H813V165H817V165H820V166H823V165H825V164H828V165H834V164H837V164H841V166H843V166H845V166H851V165H854V165H860V165H863V165H867V165H870V165H872V165H874V166H880V165H885V165H888V164H893V165H899V165H904V164H908V164H913V165H918V165H924V164H928V165H931V165H934V165H936V164H938V165H940V164H945V164H947V165H951V164H954V164H957V165H960V164H962V164H964V164H966V164H971V165H976V165H982V164H985V164H988V164H992V163H995V164H1000V164H1001V169H1000V167H995V167H992V167H988V168H985V168H982V169H976V169H971V168H966V168H964V168H962V168H960V168H957V168H954V168H951V169H947V168H945V168H940V169H938V168H936V169H934V169H931V169H928V169H924V169H918V169H913V168H908V169H904V169H899V169H893V168H888V169H885V169H880V169H874V170H872V169H870V169H867V169H863V169H860V169H854V169H851V170H845V170H843V169H841V168H837V169H834V169H828V169H825V169H823V170H820V169H817V169H813V170H808V170H805V169H802V170H799V170H794V170H791V171H786V171H782V170H779V171H774V170H771V171H766V171H765V175H764V176H763V175H762V176H761Z" fill="#48d1cc" shape-rendering="crispEdges"/><path d="M761 171H762V171H763V171H764V171H765V170H766V171H770V171H772V170H774V170H778V170H782V170H788V170H791V169H796V170H802V169H805V170H809V170H811V169H814V169H817V170H822V170H828V169H832V170H834V169H840V170H843V169H847V169H853V169H858V169H863V168H869V169H875V169H879V168H882V169H888V168H894V168H900V169H906V168H912V169H917V168H920V169H926V169H929V169H935V169H937V169H941V168H945V168H948V169H951V168H957V168H963V168H965V168H969V168H972V168H976V169H982V168H988V168H994V168H997V168H1000V168H1001V169H1000V170H997V170H994V169H988V169H982V170H976V170H972V169H969V170H965V170H963V170H957V169H951V170H948V170H945V170H941V170H937V170H935V170H929V170H926V170H920V170H917V170H912V170H906V171H900V170H894V170H888V171H882V170H879V170H875V170H869V170H863V171H858V170H853V170H847V171H843V171H840V171H834V171H832V171H828V171H822V171H817V171H814V170H811V171H809V171H805V171H802V172H796V171H791V171H788V172H782V171H778V172H774V172H772V172H770V172H766V172H765V176H764V176H763V177H762V177H761Z" fill="#c71585" shape-rendering="crispEdges"/><path d="M761 171H762V172H763V172H764V172H765V171H766V172H769V172H774V171H780V171H782V172H784V170H788V171H794V171H799V171H803V170H808V171H813V169H815V171H819V170H822V171H824V170H826V170H828V170H831V170H835V170H840V170H846V170H848V171H853V170H858V170H863V170H867V170H872V169H875V170H881V170H887V170H893V170H899V170H904V170H910V170H912V170H915V169H917V170H923V169H929V170H933V169H939V169H942V169H944V170H950V170H953V169H955V169H959V169H961V170H967V170H969V169H972V169H975V170H978V169H983V169H989V170H992V169H995V169H998V169H1001V176H998V176H995V176H992V176H989V176H983V175H978V176H975V175H972V176H969V176H967V176H961V176H959V175H955V176H953V176H950V177H944V176H942V175H939V176H933V176H929V176H923V176H917V176H915V176H912V176H910V176H904V176H899V176H893V176H887V176H881V177H875V176H872V176H867V176H863V177H858V176H853V177H848V177H846V176H840V177H835V177H831V176H828V177H826V177H824V177H822V177H819V177H815V176H813V177H808V177H803V177H799V178H794V177H788V177H784V178H782V178H780V178H774V178H769V178H766V178H765V182H764V182H763V182H762V182H761Z" fill="#191970" shape-rendering="crispEdges"/><path d="M761 177H762V178H763V177H764V177H765V177H766V178H769V177H772V177H778V178H781V177H784V177H786V176H789V176H792V177H794V177H799V177H801V176H803V176H806V177H811V176H817V177H823V176H829V176H833V176H835V177H837V176H840V176H843V176H845V176H848V176H854V176H860V176H863V176H868V176H873V176H877V176H883V176H885V175H889V176H892V175H895V176H898V175H902V175H904V175H907V176H911V176H915V175H918V176H922V176H925V175H928V175H934V176H936V176H940V175H946V175H949V176H951V175H954V175H957V175H959V175H964V176H967V176H973V176H976V175H980V175H982V175H986V176H988V175H994V175H996V176H1000V176H1001V182H1000V182H996V182H994V182H988V183H986V181H982V181H980V181H976V182H973V182H967V183H964V182H959V182H957V181H954V181H951V182H949V181H946V182H940V182H936V183H934V181H928V183H925V182H922V182H918V182H915V182H911V182H907V182H904V182H902V182H898V182H895V182H892V182H889V182H885V182H883V182H877V183H873V183H868V182H863V183H860V183H854V182H848V183H845V183H843V183H840V183H837V183H835V182H833V183H829V182H823V183H817V183H811V183H806V183H803V182H801V183H799V183H794V184H792V183H789V183H786V184H784V184H781V184H778V183H772V183H769V184H766V184H765V188H764V188H763V188H762V188H761Z" fill="#f5fffa" shape-rendering="crispEdges"/><path d="M761 183H762V184H763V183H764V184H765V184H766V183H770V183H775V183H781V183H786V182H789V182H795V182H799V182H802V181H807V182H813V182H816V183H820V182H825V181H828V182H833V182H837V182H841V182H844V182H846V181H849V182H852V181H855V182H858V182H863V182H868V181H872V182H877V181H881V181H883V181H886V181H889V181H892V181H895V181H900V181H903V181H907V182H910V181H913V181H916V181H919V181H921V181H923V181H926V181H931V181H933V181H938V181H941V181H945V182H951V182H953V181H958V181H962V181H966V181H969V180H975V181H977V181H982V181H985V181H991V180H997V180H1000V180H1001V187H1000V187H997V187H991V187H985V187H982V187H977V187H975V187H969V188H966V188H962V188H958V188H953V188H951V188H945V187H941V188H938V188H933V188H931V188H926V188H923V187H921V187H919V187H916V188H913V187H910V188H907V188H903V188H900V188H895V187H892V187H889V188H886V187H883V188H881V188H877V189H872V188H868V188H863V188H858V189H855V188H852V188H849V188H846V188H844V188H841V188H837V189H833V189H828V188H825V188H820V188H816V189H813V188H807V188H802V189H799V189H795V188H789V189H786V189H781V189H775V190H770V190H766V190H765V194H764V194H763V194H762V194H761Z" fill="#ffe4b5" shape-rendering="crispEdges"/><path d="M761 188H762V188H763V188H764V187H765V188H766V188H768V189H771V187H774V188H779V188H782V188H787V187H791V188H795V186H798V187H801V187H804V187H807V187H810V186H816V187H820V187H824V186H830V187H835V186H838V187H841V187H845V187H850V187H853V186H856V187H860V187H866V187H869V187H875V186H878V186H883V186H887V186H892V187H895V187H900V186H903V187H907V187H912V187H917V186H920V186H923V187H925V186H931V186H936V187H938V187H943V186H946V186H952V187H956V187H958V186H964V187H970V186H975V187H978V187H981V186H983V186H987V186H993V186H995V187H1001V193H995V193H993V193H987V193H983V192H981V193H978V193H975V193H970V193H964V192H958V193H956V193H952V192H946V192H943V193H938V193H936V192H931V193H925V193H923V192H920V192H917V193H912V193H907V193H903V193H900V193H895V193H892V193H887V193H883V193H878V193H875V194H869V193H866V194H860V193H856V193H853V194H850V194H845V193H841V193H838V193H835V193H830V193H824V193H820V193H816V193H810V193H807V194H804V193H801V193H798V193H795V194H791V194H787V194H782V194H779V194H774V194H771V195H768V195H766V194H765V198H764V198H763V199H762V198H761Z" fill="#808000" shape-rendering="crispEdges"/><path d="M761 193H762V193H763V193H764V193H765V193H766V193H770V193H774V193H778V193H784V192H787V192H790V192H795V193H800V192H806V192H808V193H811V193H817V191H820V193H823V192H826V192H830V191H836V192H840V191H842V192H844V192H848V192H852V192H855V192H858V191H864V192H867V192H869V191H871V192H876V192H881V192H885V191H888V192H891V192H893V192H899V191H901V192H906V191H912V192H916V193H919V192H921V192H925V191H927V192H933V192H936V191H942V191H945V192H949V191H952V192H954V192H958V193H963V191H969V191H972V192H977V192H980V192H984V192H986V192H991V192H994V192H999V192H1001V198H999V198H994V199H991V199H986V199H984V198H980V198H977V198H972V198H969V198H963V198H958V198H954V199H952V198H949V199H945V198H942V198H936V198H933V198H927V198H925V198H921V199H919V199H916V198H912V197H906V199H901V198H899V198H893V199H891V198H888V198H885V199H881V198H876V198H871V198H869V198H867V198H864V198H858V199H855V198H852V199H848V198H844V199H842V198H840V198H836V198H830V199H826V199H823V199H820V198H817V199H811V199H808V199H806V199H800V199H795V198H790V199H787V199H784V199H778V199H774V199H770V199H766V200H765V203H764V203H763V203H762V204H761Z" fill="#ffa500" shape-rendering="crispEdges"/><path d="M761 199H762V199H763V200H764V200H765V200H766V199H770V199H774V199H778V199H783V199H786V198H789V198H794V198H796V199H799V199H802V199H808V198H811V199H814V199H820V199H825V198H830V199H836V199H839V198H841V199H844V199H849V199H851V198H856V199H859V199H862V199H867V199H870V199H874V198H877V200H883V198H887V199H893V199H895V199H899V199H902V199H905V199H908V199H911V199H916V199H918V199H921V199H927V199H930V200H933V199H939V199H941V200H944V200H946V199H950V199H954V199H957V200H962V199H965V199H970V199H976V199H978V200H981V201H984V199H990V199H992V200H995V199H1000V200H1001V207H1000V206H995V206H992V206H990V206H984V207H981V206H978V206H976V206H970V206H965V205H962V207H957V206H954V205H950V206H946V206H944V206H941V205H939V205H933V207H930V205H927V206H921V206H918V206H916V206H911V206H908V205H905V206H902V205H899V206H895V206H893V205H887V205H883V206H877V205H874V206H870V205H867V206H862V206H859V205H856V205H851V205H849V206H844V205H841V204H839V205H836V206H830V205H825V205H820V206H814V206H811V205H808V205H802V205H799V206H796V204H794V205H789V205H786V206H783V205H778V205H774V206H770V206H766V206H765V210H764V210H763V210H762V210H761Z" fill="#da70d6" shape-rendering="crispEdges"/><path d="M761 208H762V209H763V208H764V209H765V209H766V209H770V208H774V208H777V208H782V208H786V208H790V208H793V208H797V208H801V207H805V207H808V208H814V207H816V207H819V207H824V207H829V207H832V207H838V207H843V206H849V207H853V207H856V208H859V207H865V207H867V208H869V206H874V206H876V207H882V207H884V207H888V207H894V206H899V206H902V207H908V206H914V206H918V206H923V206H929V206H932V207H936V206H941V207H943V207H947V206H953V206H959V207H963V206H968V206H971V206H976V207H981V207H985V207H988V205H994V206H1000V206H1001V212H1000V213H994V212H988V213H985V213H981V213H976V213H971V213H968V213H963V213H959V213H953V213H947V214H943V213H941V212H936V213H932V213H929V213H923V213H918V213H914V213H908V213H902V212H899V213H894V214H888V214H884V214H882V213H876V213H874V213H869V214H867V214H865V213H859V214H856V213H853V214H849V213H843V214H838V214H832V214H829V214H824V214H819V214H816V214H814V214H808V213H805V214H801V214H797V214H793V214H790V214H786V214H782V215H777V214H774V214H770V215H766V215H765V220H764V219H763V219H762V220H761Z" fill="#eee8aa" shape-rendering="crispEdges"/><path d="M761 215H762V215H763V216H764V215H765V215H766V215H770V215H774V214H780V215H784V214H787V215H790V215H792V213H795V215H799V214H805V214H807V214H809V214H812V214H814V213H819V214H823V213H826V213H828V214H834V214H839V214H845V214H848V213H852V214H855V213H861V213H867V213H873V213H879V213H882V213H885V213H890V213H893V213H896V213H902V213H905V213H910V214H912V213H916V213H918V213H921V213H923V213H925V213H929V212H932V214H938V213H941V214H947V213H951V213H957V212H961V213H964V214H966V213H972V213H975V213H977V213H980V213H984V213H987V212H990V213H995V213H998V213H1001V220H998V220H995V219H990V219H987V219H984V219H980V220H977V220H975V220H972V220H966V220H964V219H961V220H957V220H951V219H947V220H941V220H938V220H932V219H929V219H925V219H923V219H921V220H918V219H916V220H912V219H910V220H905V220H902V220H896V219H893V219H890V220H885V220H882V221H879V220H873V220H867V220H861V220H855V220H852V219H848V220H845V221H839V220H834V220H828V219H826V220H823V220H819V220H814V220H812V220H809V220H807V221H805V221H799V221H795V220H792V221H790V221H787V221H784V221H780V221H774V222H770V221H766V221H765V225H764V226H763V225H762V226H761Z" fill="#98fb98" shape-rendering="crispEdges"/><path d="M761 226H762V225H763V226H764V225H765V226H766V225H768V225H771V225H777V225H783V225H786V224H792V224H797V224H801V225H804V223H806V225H809V224H813V224H818V224H820V224H822V224H826V224H830V224H834V224H839V223H842V224H846V223H849V223H852V224H857V224H860V223H862V223H865V223H869V223H873V223H878V223H880V223H883V223H886V223H888V223H891V223H894V222H900V223H904V223H908V223H914V223H919V223H922V222H924V222H927V223H933V223H939V222H941V223H945V222H948V223H952V222H955V223H958V223H961V223H964V223H967V222H970V222H973V222H978V223H982V222H985V222H989V222H992V222H997V222H1001V229H997V228H992V228H989V228H985V228H982V229H978V229H973V228H970V229H967V229H964V230H961V229H958V229H955V229H952V230H948V229H945V230H941V229H939V230H933V229H927V229H924V229H922V229H919V230H914V229H908V229H904V230H900V229H894V230H891V230H888V229H886V229H883V230H880V230H878V230H873V230H869V230H865V230H862V229H860V230H857V230H852V230H849V229H846V230H842V230H839V230H834V230H830V230H826V230H822V231H820V230H818V230H813V230H809V231H806V230H804V231H801V231H797V230H792V231H786V231H783V231H777V231H771V232H768V232H766V232H765V235H764V237H763V236H762V236H761Z" fill="#afeeee" shape-rendering="crispEdges"/><path d="M761 234H762V234H763V233H764V233H765V234H766V233H769V233H774V233H779V232H782V233H785V232H790V232H793V233H796V232H801V233H806V231H812V232H814V232H817V232H820V232H822V231H827V231H830V231H834V232H837V231H839V232H845V231H848V231H854V231H856V232H861V231H863V231H867V232H871V232H876V231H881V232H885V231H888V231H894V231H896V231H899V232H904V231H907V230H913V232H916V230H918V231H924V231H928V230H933V230H936V231H940V231H944V231H950V230H956V230H961V231H965V230H968V230H971V231H976V230H979V230H981V229H985V230H988V231H991V230H994V229H996V231H1001V237H996V236H994V237H991V237H988V237H985V236H981V237H979V237H976V237H971V237H968V237H965V237H961V237H956V237H950V237H944V237H940V238H936V237H933V237H928V238H924V237H918V237H916V238H913V237H907V237H904V238H899V238H896V238H894V238H888V237H885V238H881V238H876V238H871V238H867V238H863V238H861V238H856V238H854V238H848V238H845V238H839V238H837V238H834V237H830V238H827V238H822V238H820V238H817V238H814V238H812V238H806V239H801V239H796V239H793V238H790V238H785V239H782V239H779V239H774V240H769V240H766V240H765V243H764V244H763V245H762V245H761Z" fill="#db7093" shape-rendering="crispEdges"/><path d="M761 243H762V244H763V244H764V243H765V243H766V243H769V243H774V242H777V242H781V242H784V243H790V242H793V242H796V242H799V243H802V242H804V242H807V241H811V242H813V241H816V241H820V242H823V241H829V241H835V242H839V241H844V242H847V242H850V241H853V241H855V242H859V242H864V241H866V241H869V241H872V241H877V242H880V241H883V241H885V241H888V241H891V241H893V240H898V240H901V241H903V241H905V240H908V240H912V241H918V241H921V241H924V241H926V240H931V240H933V241H937V240H940V241H943V241H948V240H950V240H956V240H962V241H967V240H970V240H974V240H979V240H985V241H991V240H993V241H999V240H1001V247H999V247H993V246H991V247H985V246H979V247H974V247H970V246H967V247H962V247H956V246H950V247H948V248H943V247H940V247H937V247H933V247H931V247H926V247H924V248H921V248H918V247H912V247H908V247H905V247H903V248H901V247H898V247H893V247H891V248H888V247H885V247H883V247H880V248H877V248H872V247H869V247H866V247H864V248H859V248H855V247H853V248H850V248H847V248H844V248H839V248H835V247H829V248H823V248H820V248H816V248H813V248H811V248H807V248H804V248H802V249H799V248H796V248H793V249H790V249H784V249H781V249H777V249H774V250H769V249H766V250H765V253H764V255H763V254H762V254H761Z" fill="#ffefd5" shape-rendering="crispEdges"/><path d="M761 255H762V254H763V255H764V255H765V255H766V255H769V254H773V254H776V254H779V254H784V254H787V253H792V253H795V253H797V253H800V253H803V252H807V252H810V253H812V253H817V253H821V253H825V253H828V253H833V252H839V252H842V252H845V252H851V252H854V253H860V252H864V252H866V251H868V251H872V252H874V252H876V252H879V251H881V252H884V252H887V251H890V252H894V252H896V251H901V252H905V251H908V251H914V251H920V252H926V251H931V251H936V252H938V251H942V251H945V250H949V251H955V251H960V251H965V251H971V250H974V251H979V250H984V251H987V251H991V251H993V251H998V252H1001V257H998V257H993V257H991V257H987V257H984V257H979V257H974V257H971V258H965V257H960V257H955V257H949V257H945V258H942V258H938V258H936V258H931V257H926V258H920V258H914V257H908V258H905V258H901V257H896V258H894V258H890V258H887V259H884V259H881V258H879V258H876V258H874V258H872V258H868V258H866V258H864V258H860V259H854V259H851V258H845V258H842V258H839V258H833V259H828V260H825V259H821V259H817V260H812V259H810V258H807V259H803V260H800V259H797V259H795V259H792V260H787V260H784V260H779V261H776V261H773V261H769V261H766V261H765V265H764V265H763V265H762V266H761Z" fill="#cd853f" shape-rendering="crispEdges"/><path d="M761 268H762V267H763V268H764V267H765V267H766V266H768V267H771V266H777V266H779V266H785V266H788V266H792V266H797V265H799V264H802V265H806V264H812V265H814V264H820V265H826V265H828V265H830V264H833V265H839V264H842V264H847V264H849V265H855V264H857V265H860V264H863V264H868V265H873V264H877V263H880V265H883V264H886V264H890V264H894V264H900V264H903V264H906V263H908V263H911V264H915V264H920V264H922V264H924V264H927V263H933V264H939V264H943V263H947V263H950V263H953V263H958V263H961V263H965V263H969V263H975V264H978V263H984V263H987V263H993V264H996V263H1000V263H1001V269H1000V269H996V270H993V270H987V270H984V269H978V270H975V270H969V270H965V270H961V269H958V270H953V269H950V269H947V270H943V270H939V270H933V270H927V270H924V270H922V270H920V271H915V270H911V270H908V269H906V270H903V270H900V270H894V271H890V270H886V271H883V271H880V270H877V271H873V271H868V270H863V271H860V271H857V271H855V271H849V271H847V271H842V271H839V271H833V271H830V272H828V271H826V272H820V271H814V272H812V271H806V271H802V271H799V272H797V272H792V272H788V271H785V272H779V273H777V272H771V273H768V273H766V273H765V277H764V278H763V277H762V278H761Z" fill="#ffc0cb" shape-rendering="crispEdges"/><path d="M761 278H762V279H763V278H764V277H765V278H766V277H769V277H772V277H775V277H779V276H782V276H787V276H791V276H794V276H797V276H800V275H806V276H809V275H813V275H815V275H818V275H821V276H826V275H829V275H831V275H836V274H839V274H842V275H846V274H850V275H854V275H859V275H863V275H867V275H870V275H874V275H879V275H882V274H886V274H891V275H896V274H899V274H904V275H907V274H910V274H912V274H915V274H921V274H925V273H927V274H931V274H933V275H936V274H942V273H946V273H949V273H952V274H958V274H964V273H968V273H974V273H977V273H981V274H986V273H991V273H993V273H995V273H1001V280H995V280H993V280H991V280H986V280H981V280H977V280H974V279H968V279H964V280H958V280H952V279H949V280H946V280H942V280H936V281H933V280H931V281H927V280H925V280H921V281H915V280H912V281H910V281H907V281H904V281H899V281H896V281H891V281H886V280H882V281H879V281H874V281H870V282H867V281H863V281H859V282H854V282H850V281H846V282H842V281H839V281H836V281H831V282H829V281H826V282H821V282H818V282H815V281H813V282H809V282H806V281H800V282H797V283H794V282H791V282H787V283H782V283H779V284H775V284H772V284H769V284H766V284H765V288H764V288H763V289H762V289H761Z" fill="#b0e0e6" shape-rendering="crispEdges"/><path d="M761 291H762V290H763V289H764V290H765V290H766V289H769V290H775V289H779V289H782V288H785V288H790V288H792V288H796V288H800V288H802V288H804V287H806V287H808V288H811V288H815V287H820V287H824V287H830V287H832V287H838V287H841V287H844V287H849V288H852V287H855V287H861V288H863V287H869V286H872V286H877V286H880V286H883V286H886V285H889V286H892V286H896V286H899V286H902V287H905V287H907V285H910V286H913V286H918V285H921V286H923V286H929V286H933V285H938V286H943V286H947V285H950V286H952V285H956V285H960V286H963V286H969V286H971V285H977V286H981V285H984V285H990V286H994V285H998V286H1001V292H998V291H994V292H990V292H984V292H981V292H977V292H971V292H969V292H963V292H960V292H956V291H952V293H950V292H947V293H943V292H938V292H933V292H929V292H923V292H921V292H918V293H913V292H910V292H907V293H905V293H902V293H899V293H896V293H892V292H889V292H886V293H883V293H880V293H877V292H872V293H869V293H863V294H861V293H855V293H852V293H849V293H844V294H841V294H838V293H832V294H830V294H824V293H820V294H815V294H811V295H808V294H806V294H804V294H802V294H800V295H796V295H792V295H790V295H785V294H782V295H779V295H775V296H769V296H766V296H765V300H764V300H763V301H762V301H761Z" fill="#800080" shape-rendering="crispEdges"/><path d="M761 302H762V302H763V301H764V301H765V302H766V301H772V301H774V301H776V301H779V301H782V300H784V301H787V300H792V299H798V299H801V300H804V300H807V300H813V299H816V298H820V299H826V298H829V299H832V299H836V298H840V299H843V298H845V300H848V298H850V299H855V298H861V298H865V298H868V299H874V299H877V298H883V298H886V298H892V297H894V298H896V298H900V298H902V298H908V297H911V298H913V298H916V299H918V298H921V298H923V298H926V297H931V298H934V298H940V297H945V297H950V298H954V298H960V298H965V297H970V297H973V298H976V298H981V297H984V297H988V297H994V297H997V296H1000V297H1001V303H1000V303H997V303H994V303H988V304H984V303H981V304H976V303H973V302H970V304H965V304H960V304H954V303H950V303H945V303H940V304H934V304H931V303H926V303H923V304H921V304H918V305H916V304H913V304H911V303H908V304H902V304H900V304H896V304H894V303H892V304H886V304H883V305H877V304H874V305H868V304H865V304H861V304H855V305H850V305H848V306H845V304H843V304H840V304H836V305H832V305H829V305H826V305H820V304H816V305H813V305H807V306H804V306H801V306H798V305H792V306H787V307H784V306H782V307H779V307H776V307H774V307H772V308H766V308H765V313H764V313H763V314H762V314H761Z" fill="#ff0000" shape-rendering="crispEdges"/><path d="M761 315H762V314H763V314H764V313H765V313H766V313H772V314H777V313H780V313H786V312H791V313H794V312H800V312H805V312H808V312H811V312H816V311H821V311H824V312H830V311H834V312H840V311H845V311H847V311H850V311H853V311H856V311H859V310H865V311H868V311H873V311H878V311H883V311H886V310H892V310H896V310H902V310H905V310H910V310H913V310H916V310H920V310H924V310H929V310H932V310H934V310H940V311H942V309H944V309H949V310H954V310H956V309H961V309H967V310H972V310H978V309H981V310H984V310H986V309H989V310H994V309H996V309H998V309H1001V315H998V315H996V316H994V316H989V315H986V316H984V316H981V315H978V316H972V316H967V315H961V315H956V316H954V316H949V315H944V315H942V316H940V316H934V316H932V316H929V316H924V317H920V316H916V316H913V317H910V316H905V316H902V316H896V316H892V316H886V317H883V317H878V317H873V317H868V317H865V316H859V317H856V317H853V317H850V317H847V317H845V317H840V317H834V317H830V318H824V317H821V317H816V318H811V318H808V317H805V318H800V319H794V319H791V318H786V319H780V320H777V320H772V319H766V319H765V325H764V326H763V327H762V327H761Z" fill="#bc8f8f" shape-rendering="crispEdges"/><path d="M761 329H762V328H763V329H764V328H765V328H766V328H769V328H775V327H779V326H785V326H788V326H791V326H795V326H798V325H801V326H805V324H811V325H817V325H823V325H826V325H829V325H835V324H839V324H845V325H847V324H853V324H856V324H858V324H862V324H866V324H872V324H875V323H880V325H885V323H888V324H891V324H893V324H896V324H898V323H904V324H906V323H909V324H911V323H914V323H917V323H922V322H928V323H931V323H933V323H935V324H941V323H947V323H949V323H952V323H954V323H960V323H963V322H969V323H972V323H977V323H981V322H987V322H992V322H998V322H1001V328H998V328H992V328H987V329H981V329H977V329H972V328H969V328H963V329H960V329H954V329H952V329H949V329H947V329H941V329H935V329H933V329H931V328H928V329H922V329H917V329H914V329H911V330H909V329H906V330H904V329H898V330H896V330H893V330H891V330H888V329H885V330H880V329H875V330H872V330H866V330H862V330H858V330H856V330H853V330H847V331H845V330H839V330H835V331H829V331H826V331H823V331H817V331H811V331H805V332H801V332H798V332H795V332H791V332H788V332H785V332H779V333H775V334H769V334H766V334H765V340H764V341H763V340H762V341H761Z" fill="#4169e1" shape-rendering="crispEdges"/><path d="M761 342H762V343H763V343H764V342H765V341H766V342H771V342H774V340H778V340H781V340H786V339H790V339H793V340H796V340H800V338H803V339H806V339H808V338H814V338H819V339H825V338H831V338H834V338H839V338H843V338H846V338H849V338H854V338H860V338H863V338H865V338H870V337H873V337H878V337H880V337H882V337H885V338H888V337H894V337H900V337H906V336H909V336H915V337H918V336H922V336H927V336H931V336H935V336H939V336H943V336H948V337H951V337H953V336H959V336H964V335H967V336H969V336H972V335H978V335H984V336H990V335H996V336H999V335H1001V342H999V342H996V341H990V342H984V341H978V341H972V342H969V342H967V342H964V342H959V343H953V343H951V343H948V343H943V342H939V342H935V342H931V342H927V342H922V342H918V342H915V342H909V343H906V343H900V343H894V343H888V343H885V343H882V343H880V343H878V343H873V344H870V344H865V344H863V344H860V344H854V343H849V345H846V344H843V344H839V344H834V344H831V344H825V345H819V345H814V344H808V345H806V345H803V344H800V346H796V346H793V345H790V345H786V346H781V346H778V346H774V348H771V347H766V348H765V354H764V354H763V355H762V354H761Z" fill="#8b4513" shape-rendering="crispEdges"/><path d="M761 358H762V357H763V356H764V356H765V357H766V356H769V355H773V354H779V354H781V354H785V353H791V353H795V352H797V352H799V353H803V352H806V352H809V353H812V352H817V352H821V351H827V351H830V351H834V350H839V351H842V351H848V351H851V350H855V351H857V350H860V350H864V350H867V351H870V350H876V351H878V351H881V349H885V349H888V350H892V349H895V350H898V350H904V349H908V349H911V350H915V350H920V350H922V349H924V349H928V349H930V349H935V349H939V349H943V349H946V350H950V348H953V348H957V348H959V349H962V348H967V349H973V349H979V349H982V348H987V348H991V348H994V348H996V348H1000V347H1001V354H1000V354H996V354H994V354H991V354H987V354H982V354H979V355H973V355H967V354H962V355H959V354H957V354H953V354H950V355H946V354H943V355H939V355H935V355H930V355H928V356H924V355H922V356H920V355H915V356H911V356H908V355H904V355H898V356H895V356H892V356H888V356H885V355H881V357H878V356H876V356H870V357H867V356H864V356H860V356H857V357H855V356H851V357H848V357H842V357H839V356H834V357H830V358H827V358H821V358H817V358H812V358H809V358H806V358H803V359H799V358H797V359H795V359H791V360H785V360H781V361H779V361H773V361H769V362H766V363H765V368H764V368H763V369H762V369H761Z" fill="#fa8072" shape-rendering="crispEdges"/><path d="M761 369H762V370H763V369H764V369H765V369H766V369H769V368H774V367H779V367H785V366H787V366H790V366H794V366H799V365H802V365H807V364H810V365H814V365H818V364H821V364H824V364H827V364H830V364H835V364H841V364H843V364H846V364H849V363H852V364H854V364H857V362H863V363H868V363H871V362H874V362H879V362H885V363H889V363H892V362H896V362H899V362H905V363H907V362H910V363H916V362H922V361H925V361H929V361H934V362H938V361H941V361H943V361H949V361H952V362H954V362H956V361H959V362H962V361H964V361H968V362H971V362H976V361H981V361H984V361H990V360H992V361H997V360H1001V367H997V367H992V366H990V367H984V367H981V367H976V367H971V368H968V367H964V367H962V368H959V368H956V368H954V368H952V367H949V367H943V367H941V367H938V368H934V367H929V367H925V367H922V368H916V368H910V369H907V368H905V368H899V368H896V368H892V369H889V369H885V369H879V368H874V368H871V369H868V369H863V369H857V369H854V370H852V369H849V370H846V370H843V370H841V370H835V370H830V370H827V370H824V370H821V371H818V371H814V371H810V370H807V371H802V371H799V372H794V372H790V372H787V372H785V373H779V373H774V375H769V375H766V375H765V381H764V381H763V381H762V381H761Z" fill="#2e8b57" shape-rendering="crispEdges"/><path d="M761 382H762V381H763V381H764V380H765V381H766V379H771V380H774V379H780V378H786V378H791V377H794V378H800V378H802V376H805V377H810V377H812V377H814V377H817V376H821V377H826V376H829V377H835V376H840V376H843V376H845V375H849V376H851V376H854V375H859V376H862V375H865V375H868V376H873V375H878V375H881V375H886V375H889V375H892V375H897V375H903V376H906V375H910V375H916V374H919V374H922V375H925V375H931V375H935V374H938V374H943V374H946V374H951V374H954V374H958V375H961V373H964V373H970V374H973V373H976V373H980V374H983V374H987V373H991V374H995V374H998V373H1001V379H998V379H995V379H991V378H987V379H983V379H980V379H976V380H973V379H970V379H964V379H961V380H958V379H954V380H951V380H946V380H943V380H938V380H935V380H931V380H925V380H922V380H919V380H916V380H910V381H906V381H903V381H897V381H892V380H889V380H886V381H881V381H878V381H873V381H868V380H865V381H862V381H859V381H854V381H851V381H849V381H845V381H843V381H840V382H835V382H829V382H826V382H821V382H817V383H814V382H812V383H810V383H805V382H802V383H800V384H794V383H791V383H786V384H780V384H774V385H771V385H766V386H765V392H764V392H763V392H762V393H761Z" fill="#fff5ee" shape-rendering="crispEdges"/><path d="M761 395H762V395H763V395H764V395H765V394H766V394H769V393H774V393H780V392H784V391H786V391H789V391H793V391H796V391H802V391H807V390H811V391H814V390H819V389H824V390H830V390H835V389H838V389H844V389H846V389H852V389H858V389H864V388H868V387H873V388H878V388H881V387H883V388H886V388H890V388H896V388H900V388H903V388H908V388H910V387H916V387H920V387H922V388H924V387H928V387H930V387H932V386H937V386H941V387H944V386H947V387H950V387H956V386H960V386H966V386H968V387H972V386H977V386H982V386H986V385H991V385H994V386H999V386H1001V392H999V392H994V391H991V391H986V391H982V392H977V392H972V392H968V392H966V392H960V392H956V392H950V392H947V391H944V392H941V392H937V392H932V392H930V393H928V393H924V393H922V393H920V393H916V393H910V394H908V393H903V394H900V393H896V394H890V393H886V394H883V394H881V394H878V394H873V393H868V393H864V394H858V394H852V394H846V394H844V394H838V394H835V395H830V395H824V394H819V395H814V396H811V396H807V396H802V396H796V396H793V396H789V397H786V397H784V398H780V399H774V398H769V399H766V399H765V406H764V406H763V407H762V407H761Z" fill="#a0522d" shape-rendering="crispEdges"/><path d="M761 406H762V405H763V406H764V406H765V405H766V406H771V403H777V404H780V403H783V403H786V403H789V402H792V403H794V403H796V403H799V402H801V402H805V401H808V402H814V402H818V401H824V402H830V401H834V401H836V400H840V401H842V401H847V401H849V400H854V401H858V400H861V400H863V401H868V400H874V400H877V400H880V400H883V399H887V400H890V399H893V400H896V399H902V400H907V400H910V399H915V399H918V399H921V400H923V399H926V400H929V399H935V399H940V400H942V399H944V399H950V399H953V398H955V399H960V399H966V398H968V398H970V398H974V399H979V398H983V398H989V398H993V399H996V398H998V398H1001V404H998V404H996V404H993V404H989V403H983V403H979V404H974V404H970V404H968V403H966V405H960V405H955V404H953V404H950V405H944V405H942V405H940V405H935V404H929V405H926V404H923V405H921V405H918V405H915V405H910V405H907V405H902V405H896V405H893V405H890V405H887V405H883V405H880V406H877V406H874V406H868V406H863V405H861V406H858V407H854V406H849V406H847V406H842V407H840V406H836V406H834V407H830V407H824V407H818V407H814V408H808V407H805V408H801V407H799V408H796V409H794V409H792V407H789V409H786V408H783V409H780V410H777V409H771V411H766V410H765V417H764V417H763V417H762V417H761Z" fill="#c0c0c0" shape-rendering="crispEdges"/><path d="M761 419H762V420H763V420H764V420H765V419H766V419H769V419H772V418H775V418H778V417H783V416H787V416H791V416H794V416H798V416H802V415H805V414H811V414H817V415H819V415H823V414H827V413H831V414H837V414H840V414H846V414H849V414H853V413H859V413H862V413H868V413H874V413H878V412H884V413H886V412H890V412H894V413H897V412H902V412H904V412H910V413H914V412H917V412H922V412H925V411H928V411H930V412H934V412H938V412H940V411H942V411H945V412H949V411H953V412H956V411H960V411H965V411H968V410H973V411H976V411H980V411H985V410H988V411H992V410H994V410H1000V410H1001V416H1000V416H994V416H992V416H988V416H985V417H980V416H976V416H973V416H968V416H965V416H960V417H956V417H953V416H949V417H945V417H942V417H940V417H938V417H934V417H930V417H928V417H925V417H922V417H917V417H914V418H910V418H904V417H902V418H897V418H894V418H890V418H886V418H884V418H878V418H874V418H868V419H862V419H859V418H853V419H849V419H846V419H840V419H837V420H831V419H827V420H823V420H819V420H817V420H811V420H805V421H802V422H798V422H794V421H791V422H787V422H783V422H778V424H775V423H772V424H769V424H766V424H765V431H764V431H763V431H762V431H761Z" fill="#87ceeb" shape-rendering="crispEdges"/><path d="M761 431H762V431H763V430H764V430H765V430H766V430H769V429H771V429H774V429H777V429H782V429H784V428H789V428H792V428H796V427H800V427H803V427H806V427H809V426H812V426H815V426H818V426H824V426H827V425H830V425H833V425H835V426H840V426H846V424H851V425H853V425H855V425H861V425H864V425H867V424H872V425H876V424H879V424H885V424H888V424H891V425H895V423H898V424H901V424H903V423H909V423H913V424H918V424H920V423H922V423H925V423H930V424H933V423H935V423H938V423H944V423H950V423H955V423H959V423H963V422H968V422H974V422H978V423H982V422H984V423H989V422H992V422H995V422H997V422H1001V428H997V428H995V428H992V428H989V428H984V428H982V428H978V427H974V428H968V427H963V429H959V428H955V429H950V428H944V429H938V429H935V429H933V429H930V429H925V429H922V429H920V429H918V429H913V429H909V429H903V429H901V430H898V429H895V430H891V430H888V430H885V430H879V430H876V430H872V430H867V431H864V430H861V430H855V430H853V431H851V430H846V431H840V431H835V431H833V431H830V431H827V431H824V432H818V432H815V432H812V431H809V432H806V433H803V432H800V432H796V433H792V433H789V433H784V435H782V435H777V435H774V434H771V435H769V436H766V436H765V442H764V442H763V442H762V442H761Z" fill="#6a5acd" shape-rendering="crispEdges"/><path d="M761 443H762V443H763V443H764V443H765V442H766V443H768V442H773V441H776V441H782V439H786V440H791V439H795V438H800V438H803V439H809V438H814V437H820V437H824V437H827V437H830V436H833V436H838V436H843V437H845V436H849V436H853V437H855V436H857V435H861V436H864V436H870V436H872V436H878V436H883V436H886V436H889V435H894V436H898V435H900V435H904V435H908V435H914V435H918V434H921V434H925V434H930V434H933V434H935V434H940V434H943V434H949V434H952V434H957V434H960V434H963V433H969V433H972V434H974V433H977V433H983V433H986V433H989V433H992V433H996V433H999V432H1001V438H999V438H996V439H992V438H989V438H986V438H983V438H977V438H974V439H972V439H969V439H963V440H960V439H957V440H952V439H949V439H943V439H940V440H935V439H933V440H930V439H925V440H921V440H918V439H914V441H908V440H904V441H900V440H898V441H894V441H889V441H886V441H883V441H878V441H872V441H870V441H864V441H861V441H857V441H855V442H853V442H849V441H845V442H843V442H838V442H833V442H830V442H827V443H824V443H820V443H814V444H809V444H803V443H800V443H795V445H791V445H786V445H782V446H776V447H773V447H768V448H766V448H765V454H764V454H763V455H762V455H761Z" fill="#708090" shape-rendering="crispEdges"/><path d="M761 457H762V456H763V456H764V456H765V456H766V455H771V453H776V453H782V452H785V452H789V452H793V451H796V451H800V450H804V450H806V450H810V449H814V449H817V449H821V449H825V449H831V449H835V449H838V448H844V448H850V447H854V448H856V448H859V448H862V448H865V447H870V448H873V448H876V447H879V447H881V447H883V446H886V447H889V447H892V448H894V446H899V447H902V447H904V446H910V446H913V446H918V446H921V446H924V446H930V445H933V446H936V445H940V446H945V446H948V446H953V446H955V444H957V445H963V445H968V445H970V444H976V444H981V445H983V444H988V444H992V445H995V445H1000V444H1001V449H1000V450H995V450H992V450H988V450H983V450H981V450H976V450H970V449H968V450H963V451H957V450H955V451H953V451H948V451H945V451H940V451H936V452H933V451H930V451H924V451H921V451H918V452H913V451H910V451H904V452H902V453H899V452H894V453H892V452H889V452H886V452H883V452H881V452H879V453H876V454H873V453H870V452H865V453H862V453H859V454H856V454H854V453H850V454H844V454H838V455H835V454H831V454H825V454H821V455H817V454H814V455H810V456H806V456H804V455H800V456H796V457H793V457H789V458H785V457H782V458H776V459H771V461H766V461H765V467H764V468H763V468H762V469H761Z" fill="#fffafa" shape-rendering="crispEdges"/><path d="M761 468H762V468H763V467H764V467H765V467H766V467H768V467H771V465H776V465H779V464H785V463H788V463H794V462H796V462H798V462H802V460H805V461H810V461H815V460H819V460H822V460H826V460H829V460H834V459H839V459H845V459H849V459H852V459H855V458H858V458H861V459H867V458H869V458H874V458H876V458H879V458H882V458H888V457H891V457H893V458H898V457H901V457H904V456H907V457H911V457H913V457H916V457H919V457H924V456H926V456H931V456H934V456H938V455H943V456H949V456H952V455H954V456H959V455H962V455H964V456H967V455H969V455H975V455H977V455H982V455H984V454H989V455H993V455H996V454H1001V459H996V460H993V460H989V459H984V461H982V460H977V461H975V461H969V461H967V461H964V460H962V461H959V461H954V460H952V462H949V462H943V461H938V462H934V461H931V461H926V462H924V463H919V462H916V462H913V462H911V463H907V462H904V463H901V462H898V463H893V462H891V463H888V464H882V464H879V464H876V463H874V464H869V463H867V464H861V464H858V463H855V464H852V464H849V465H845V464H839V465H834V465H829V465H826V465H822V466H819V466H815V466H810V467H805V466H802V467H798V468H796V467H794V468H788V468H785V469H779V471H776V470H771V472H768V472H766V473H765V479H764V479H763V479H762V480H761Z" fill="#00ff7f" shape-rendering="crispEdges"/><path d="M761 479H762V477H763V478H764V477H765V477H766V476H772V475H775V475H780V474H782V473H785V473H789V472H795V472H801V472H803V472H805V470H810V471H815V471H817V471H823V470H828V469H831V469H836V470H839V470H842V469H845V469H848V469H852V470H855V469H861V468H864V468H869V468H872V467H876V468H880V467H886V467H892V468H894V468H896V467H900V467H902V467H904V467H906V467H909V466H912V468H914V466H917V466H922V466H927V467H930V466H935V465H938V466H940V467H945V465H947V465H950V465H956V465H959V466H963V465H965V465H967V465H972V465H976V464H982V465H985V465H987V465H992V464H995V465H997V465H999V464H1001V469H999V470H997V470H995V469H992V470H987V471H985V470H982V470H976V470H972V471H967V471H965V470H963V471H959V471H956V471H950V471H947V470H945V472H940V472H938V471H935V472H930V472H927V471H922V472H917V472H914V473H912V472H909V473H906V473H904V473H902V473H900V472H896V473H894V473H892V473H886V472H880V473H876V473H872V474H869V474H864V474H861V475H855V475H852V474H848V475H845V474H842V475H839V476H836V475H831V475H828V475H823V476H817V476H815V476H810V476H805V477H803V477H801V478H795V478H789V479H785V479H782V479H780V480H775V481H772V482H766V482H765V489H764V490H763V489H762V490H761Z" fill="#4682b4" shape-rendering="crispEdges"/><path d="M761 488H762V487H763V486H764V486H765V486H766V485H770V485H774V485H776V483H778V484H783V483H785V482H788V482H792V482H795V482H798V481H801V480H806V480H812V480H818V479H823V479H827V478H830V479H834V478H840V478H844V478H847V478H850V478H853V478H855V478H859V477H862V477H868V478H874V477H877V477H880V476H882V477H885V476H891V476H894V477H897V476H900V477H904V475H906V476H912V476H918V476H921V476H927V475H933V476H936V476H940V475H943V475H947V475H950V475H956V475H960V474H966V474H971V474H974V474H979V474H984V474H987V474H989V473H991V473H997V473H1001V478H997V479H991V479H989V479H987V479H984V479H979V479H974V479H971V480H966V480H960V480H956V481H950V480H947V480H943V481H940V481H936V481H933V481H927V481H921V481H918V482H912V481H906V481H904V482H900V481H897V482H894V481H891V481H885V482H882V482H880V483H877V483H874V483H868V483H862V483H859V483H855V484H853V483H850V484H847V484H844V484H840V484H834V484H830V484H827V484H823V484H818V485H812V486H806V486H801V487H798V487H795V487H792V487H788V488H785V488H783V489H778V489H776V490H774V490H770V491H766V491H765V497H764V498H763V499H762V499H761Z" fill="#d2b48c" shape-rendering="crispEdges"/><path d="M761 494H762V493H763V493H764V493H765V492H766V491H770V491H773V491H777V490H782V489H787V489H789V489H794V488H797V488H802V488H804V488H809V487H812V488H815V487H821V487H825V487H831V487H833V487H837V486H841V486H846V486H848V486H851V486H856V486H859V485H865V486H868V485H873V485H877V486H881V485H886V485H889V485H893V485H897V484H901V484H905V485H911V484H914V484H920V484H923V485H926V484H928V484H932V484H937V484H942V484H947V484H953V483H959V484H962V483H965V483H970V483H976V484H979V483H982V484H986V483H991V483H997V482H1001V488H997V489H991V488H986V489H982V489H979V489H976V489H970V489H965V489H962V489H959V490H953V489H947V490H942V490H937V489H932V490H928V490H926V490H923V490H920V490H914V490H911V490H905V490H901V490H897V490H893V491H889V490H886V491H881V491H877V491H873V491H868V491H865V490H859V491H856V491H851V491H848V492H846V491H841V491H837V493H833V492H831V492H825V493H821V493H815V493H812V492H809V493H804V493H802V493H797V493H794V494H789V494H787V495H782V495H777V497H773V497H770V497H766V498H765V505H764V504H763V505H762V505H761Z" fill="#008080" shape-rendering="crispEdges"/><path d="M761 504H762V503H763V503H764V503H765V503H766V502H772V500H774V500H780V499H783V499H788V499H794V497H799V497H801V497H803V497H806V497H809V496H815V495H821V496H825V495H828V496H830V495H832V495H835V495H838V495H843V494H846V495H850V494H853V494H857V494H862V495H864V494H869V494H872V493H875V494H877V494H879V493H881V493H884V493H888V493H891V493H895V493H898V493H900V493H906V493H911V493H914V493H919V493H921V492H923V492H926V492H932V491H938V492H942V492H945V492H950V492H956V491H961V490H963V491H966V491H970V490H972V491H977V490H981V491H984V490H988V491H990V490H993V490H995V491H997V490H1000V490H1001V496H1000V495H997V496H995V495H993V496H990V497H988V496H984V496H981V496H977V497H972V496H970V496H966V496H963V496H961V496H956V497H950V497H945V497H942V497H938V497H932V497H926V497H923V498H921V499H919V498H914V498H911V499H906V499H900V499H898V498H895V498H891V499H888V499H884V499H881V499H879V500H877V500H875V499H872V500H869V500H864V500H862V499H857V499H853V499H850V501H846V500H843V500H838V500H835V501H832V500H830V502H828V501H825V502H821V501H815V502H809V503H806V503H803V503H801V502H799V503H794V504H788V504H783V505H780V506H774V506H772V508H766V509H765V514H764V514H763V514H762V515H761Z" fill="#d8bfd8" shape-rendering="crispEdges"/><path d="M761 513H762V513H763V512H764V512H765V511H766V510H769V511H774V509H777V508H781V508H784V507H787V507H790V507H794V506H799V506H802V506H805V505H808V506H811V505H813V505H815V505H820V505H825V504H829V503H833V504H839V503H845V503H850V503H856V503H862V503H864V502H868V502H871V502H873V502H876V502H881V502H884V501H887V502H889V502H894V502H897V501H901V501H904V501H910V501H914V501H916V500H921V501H924V501H928V500H931V500H935V500H939V500H942V500H945V500H950V499H955V499H958V499H960V500H963V499H968V499H974V498H976V499H981V499H983V498H987V499H993V497H997V498H1001V503H997V503H993V504H987V504H983V504H981V505H976V505H974V505H968V505H963V505H960V505H958V505H955V505H950V506H945V505H942V506H939V505H935V506H931V506H928V506H924V506H921V506H916V507H914V507H910V507H904V507H901V507H897V507H894V507H889V508H887V507H884V508H881V507H876V507H873V508H871V507H868V507H864V509H862V509H856V508H850V508H845V509H839V510H833V509H829V510H825V510H820V510H815V510H813V511H811V511H808V511H805V511H802V511H799V513H794V512H790V513H787V513H784V513H781V514H777V515H774V516H769V516H766V516H765V523H764V523H763V524H762V524H761Z" fill="#ff6347" shape-rendering="crispEdges"/><path d="M761 522H762V521H763V521H764V521H765V521H766V520H770V519H772V518H776V518H779V516H785V516H789V516H791V515H796V515H801V514H804V515H810V514H816V514H819V513H825V513H828V512H832V512H834V513H837V512H843V512H845V512H849V511H852V511H855V512H858V511H860V511H866V511H869V511H872V511H878V510H882V510H885V510H887V510H893V509H898V510H900V510H904V509H910V509H915V508H920V509H924V508H926V508H928V508H933V508H935V508H938V508H941V508H945V508H949V507H954V507H957V506H963V507H965V507H969V507H975V507H977V506H979V506H982V506H986V506H990V506H994V506H997V506H1001V511H997V512H994V511H990V511H986V511H982V511H979V511H977V512H975V512H969V512H965V512H963V512H957V513H954V513H949V514H945V514H941V514H938V513H935V513H933V513H928V514H926V514H924V514H920V514H915V514H910V515H904V515H900V515H898V515H893V515H887V516H885V516H882V515H878V516H872V517H869V516H866V517H860V517H858V517H855V517H852V517H849V518H845V518H843V518H837V518H834V518H832V518H828V519H825V518H819V519H816V519H810V520H804V520H801V520H796V520H791V522H789V521H785V522H779V524H776V524H772V524H770V525H766V526H765V532H764V533H763V532H762V533H761Z" fill="#40e0d0" shape-rendering="crispEdges"/><path d="M761 526H762V526H763V526H764V526H765V525H766V524H771V523H774V523H778V522H781V522H786V521H789V520H792V521H796V520H800V520H803V519H806V519H809V519H811V519H817V518H823V518H825V518H829V518H834V517H837V517H841V517H847V517H851V516H854V516H858V517H862V517H866V517H869V516H872V516H874V516H876V515H879V516H882V515H885V515H889V515H892V515H896V515H901V515H904V514H907V515H909V514H913V514H919V514H922V514H926V514H929V514H932V514H934V513H937V513H940V514H944V513H950V513H956V513H961V513H966V512H969V512H972V513H978V512H980V512H983V511H988V512H993V512H997V512H1001V517H997V518H993V517H988V517H983V517H980V518H978V518H972V517H969V518H966V518H961V518H956V518H950V519H944V519H940V519H937V519H934V519H932V520H929V519H926V520H922V519H919V519H913V520H909V521H907V520H904V520H901V520H896V521H892V521H889V521H885V521H882V522H879V521H876V521H874V522H872V522H869V522H866V522H862V522H858V522H854V522H851V522H847V522H841V523H837V523H834V524H829V524H825V523H823V524H817V524H811V524H809V524H806V525H803V525H800V525H796V526H792V526H789V527H786V528H781V528H778V528H774V529H771V530H766V530H765V537H764V538H763V538H762V537H761Z" fill="#ee82ee" shape-rendering="crispEdges"/><path d="M761 532H762V532H763V533H764V532H765V532H766V531H769V530H773V530H776V529H781V528H783V528H788V528H792V527H795V527H799V526H803V526H806V526H808V525H812V525H815V525H817V525H822V525H825V524H829V525H831V524H834V524H840V524H843V524H846V523H850V523H855V524H858V523H861V523H864V523H866V522H870V522H876V522H878V522H883V522H886V522H891V521H894V521H897V521H902V521H907V521H911V520H914V521H919V521H923V521H926V521H932V520H935V520H941V519H944V520H950V520H954V520H960V519H963V519H967V519H969V520H975V519H979V518H982V518H985V518H988V519H993V518H995V518H997V518H1001V524H997V523H995V523H993V525H988V524H985V524H982V524H979V525H975V525H969V524H967V524H963V525H960V526H954V525H950V525H944V525H941V526H935V525H932V526H926V526H923V527H919V526H914V526H911V527H907V527H902V526H897V527H894V527H891V527H886V527H883V528H878V527H876V528H870V528H866V528H864V528H861V528H858V529H855V528H850V529H846V530H843V529H840V529H834V529H831V530H829V529H825V530H822V531H817V531H815V531H812V530H808V531H806V531H803V531H799V532H795V533H792V534H788V534H783V534H781V535H776V536H773V535H769V537H766V537H765V543H764V544H763V544H762V544H761Z" fill="#c71585" shape-rendering="crispEdges"/><path d="M761 540H762V540H763V539H764V538H765V539H766V538H769V537H773V535H779V535H784V534H786V534H791V533H794V533H798V532H804V532H810V531H816V531H821V531H825V530H828V530H833V529H836V530H841V530H844V529H847V529H849V529H851V529H857V529H861V528H864V528H868V528H873V528H876V528H880V527H886V527H889V528H892V528H894V527H897V527H901V527H906V527H912V526H918V527H920V526H925V526H927V526H933V526H939V526H942V526H945V525H948V525H952V525H956V525H959V526H965V525H971V524H977V525H980V525H983V524H987V524H993V524H996V523H1001V529H996V529H993V529H987V529H983V530H980V530H977V530H971V530H965V531H959V531H956V531H952V531H948V531H945V531H942V532H939V532H933V531H927V531H925V532H920V533H918V532H912V532H906V533H901V532H897V532H894V533H892V533H889V533H886V533H880V534H876V534H873V534H868V534H864V534H861V534H857V535H851V535H849V535H847V535H844V536H841V536H836V535H833V535H828V536H825V536H821V537H816V536H810V537H804V538H798V538H794V539H791V540H786V540H784V540H779V541H773V543H769V543H766V544H765V550H764V550H763V551H762V551H761Z" fill="#f5deb3" shape-rendering="crispEdges"/><path d="M761 544H762V545H763V544H764V544H765V543H766V543H769V542H772V542H775V541H778V541H781V540H785V539H790V539H796V538H800V538H804V538H807V537H813V537H818V536H820V536H826V536H828V536H831V536H837V536H843V535H847V535H850V535H852V535H857V534H863V533H866V535H869V534H871V533H874V534H876V534H879V534H881V534H884V533H889V533H894V533H897V533H903V533H906V532H909V532H914V532H917V532H920V533H923V532H928V531H932V531H934V532H939V531H941V531H944V531H948V531H953V530H956V530H959V530H964V530H968V530H970V530H973V530H979V529H982V530H984V530H989V530H991V530H995V529H1000V529H1001V535H1000V535H995V535H991V535H989V535H984V535H982V535H979V536H973V536H970V535H968V535H964V536H959V535H956V536H953V536H948V536H944V536H941V536H939V537H934V536H932V537H928V537H923V538H920V537H917V537H914V538H909V538H906V538H903V538H897V539H894V539H889V539H884V539H881V538H879V540H876V540H874V539H871V539H869V540H866V539H863V540H857V540H852V540H850V540H847V541H843V541H837V541H831V542H828V541H826V542H820V542H818V542H813V543H807V543H804V543H800V544H796V545H790V544H785V546H781V546H778V546H775V547H772V548H769V549H766V549H765V556H764V555H763V557H762V556H761Z" fill="#ffffff" shape-rendering="crispEdges"/><path d="M761 549H762V549H763V548H764V548H765V547H766V547H769V546H771V546H777V544H782V544H784V543H789V544H793V543H798V542H801V542H805V542H811V541H817V541H820V541H825V541H828V540H830V540H835V540H837V539H843V540H845V540H848V539H853V539H859V539H861V539H867V539H873V539H875V539H877V538H879V539H881V538H887V539H892V539H896V538H898V538H901V538H905V537H908V537H911V537H914V537H917V537H919V537H922V537H928V537H931V537H935V537H941V536H945V536H948V537H950V535H954V536H957V536H960V536H965V536H969V535H973V535H976V535H980V536H985V535H987V535H992V535H996V534H998V535H1001V540H998V539H996V540H992V540H987V541H985V541H980V540H976V541H973V541H969V541H965V541H960V542H957V541H954V541H950V542H948V541H945V541H941V542H935V543H931V542H928V543H922V542H919V542H917V543H914V542H911V542H908V542H905V544H901V543H898V544H896V544H892V544H887V543H881V544H879V544H877V544H875V544H873V544H867V544H861V544H859V545H853V544H848V546H845V545H843V545H837V546H835V546H830V546H828V546H825V547H820V546H817V547H811V547H805V548H801V547H798V548H793V549H789V549H784V549H782V550H777V552H771V552H769V553H766V553H765V559H764V560H763V560H762V560H761Z" fill="#ffff00" shape-rendering="crispEdges"/><path d="M761 555H762V555H763V554H764V554H765V554H766V553H769V552H774V552H779V551H782V551H785V550H787V550H791V548H794V549H799V548H803V547H806V547H812V547H814V547H820V546H824V547H827V546H830V546H835V545H840V546H845V546H850V544H856V544H859V545H861V545H864V545H869V544H872V544H875V544H879V544H884V544H888V544H893V543H896V543H901V543H906V543H911V543H916V543H919V542H924V542H927V542H931V542H934V542H938V542H941V541H944V541H950V541H952V542H958V541H962V541H967V541H970V540H974V540H978V540H983V540H986V540H989V540H995V539H997V539H1001V544H997V544H995V545H989V545H986V546H983V545H978V546H974V545H970V547H967V546H962V546H958V547H952V546H950V546H944V546H941V547H938V547H934V547H931V547H927V547H924V547H919V548H916V548H911V548H906V548H901V549H896V548H893V549H888V549H884V549H879V549H875V550H872V549H869V550H864V551H861V550H859V549H856V549H850V551H845V551H840V551H835V552H830V551H827V553H824V552H820V553H814V552H812V553H806V553H803V553H799V554H794V554H791V555H787V555H785V556H782V556H779V557H774V557H769V559H766V559H765V566H764V566H763V567H762V567H761Z" fill="#9acd32" shape-rendering="crispEdges"/><path d="M761 560H762V559H763V560H764V559H765V559H766V559H769V558H775V557H778V556H780V556H783V555H787V555H790V553H795V553H801V553H804V553H808V553H813V552H817V551H822V551H825V551H830V550H832V551H835V551H838V550H841V550H844V550H849V549H852V550H856V550H859V549H863V549H865V549H870V548H873V548H876V548H878V548H883V548H887V548H893V547H897V547H903V546H909V546H914V546H917V546H921V546H924V546H927V546H930V545H932V545H935V545H941V545H944V546H947V544H953V545H956V544H959V544H961V544H964V543H967V544H972V544H975V544H979V544H982V543H984V543H988V542H991V542H994V542H997V542H1000V542H1001V548H1000V548H997V548H994V548H991V548H988V549H984V549H982V549H979V549H975V549H972V549H967V549H964V550H961V550H959V549H956V549H953V550H947V551H944V550H941V551H935V551H932V551H930V552H927V552H924V552H921V551H917V551H914V552H909V552H903V552H897V553H893V553H887V553H883V554H878V553H876V553H873V553H870V555H865V555H863V554H859V555H856V555H852V555H849V555H844V556H841V555H838V556H835V556H832V556H830V556H825V557H822V557H817V557H813V558H808V558H804V558H801V558H795V559H790V560H787V560H783V561H780V561H778V562H775V563H769V564H766V564H765V571H764V571H763V571H762V571H761Z" fill="#ffff00" shape-rendering="crispEdges"/><path d="M761 564H762V564H763V563H764V562H765V563H766V562H769V561H775V560H778V560H781V560H784V559H789V558H794V557H800V556H803V556H808V556H810V556H812V555H815V556H817V555H819V555H822V555H825V555H828V555H832V554H836V554H842V554H845V554H849V554H852V553H857V553H860V553H864V553H868V552H871V552H874V552H876V552H880V551H883V552H889V551H895V552H898V551H904V551H910V551H912V550H916V551H918V550H922V550H928V550H931V549H937V550H940V549H945V549H950V548H956V548H960V548H964V548H969V548H972V547H976V547H980V548H983V547H987V547H989V548H993V547H998V546H1001V550H998V551H993V552H989V551H987V551H983V552H980V551H976V551H972V552H969V552H964V552H960V552H956V553H950V553H945V553H940V554H937V553H931V554H928V554H922V554H918V555H916V554H912V555H910V555H904V554H898V556H895V555H889V556H883V555H880V556H876V556H874V556H871V556H868V556H864V556H860V556H857V557H852V557H849V557H845V558H842V558H836V558H832V559H828V559H825V560H822V559H819V559H817V560H815V560H812V560H810V560H808V560H803V560H800V561H794V563H789V563H784V563H781V564H778V564H775V565H769V566H766V566H765V572H764V573H763V574H762V573H761Z" fill="#00ff00" shape-rendering="crispEdges"/><path d="M761 565H762V565H763V564H764V563H765V564H766V562H772V562H775V562H779V560H782V560H784V559H787V559H792V558H798V559H801V558H804V558H808V556H810V558H816V557H819V556H822V557H827V556H831V556H833V555H836V555H840V555H846V555H849V555H854V554H857V554H863V555H869V554H875V554H881V554H886V553H889V553H894V553H900V552H906V552H909V552H915V552H917V552H922V552H926V552H929V552H934V552H937V552H941V551H944V551H947V551H950V550H956V551H961V551H964V550H967V550H970V551H975V550H980V550H982V549H984V549H987V550H989V550H991V550H996V549H1000V549H1001V553H1000V553H996V554H991V554H989V554H987V554H984V553H982V554H980V553H975V554H970V554H967V555H964V555H961V555H956V555H950V555H947V556H944V555H941V556H937V556H934V556H929V556H926V556H922V556H917V556H915V556H909V556H906V556H900V557H894V556H889V557H886V558H881V558H875V558H869V559H863V558H857V558H854V559H849V559H846V559H840V559H836V559H833V560H831V560H827V560H822V561H819V561H816V561H810V561H808V562H804V561H801V563H798V562H792V563H787V563H784V564H782V564H779V565H775V566H772V566H766V568H765V574H764V573H763V574H762V575H761Z" fill="#00ffff" shape-rendering="crispEdges"/><path d="M761 567H762V567H763V566H764V565H765V566H766V566H769V564H772V563H777V563H783V562H789V561H795V561H800V560H803V560H806V560H809V560H812V560H818V560H821V559H827V559H829V559H831V558H834V559H836V559H839V558H845V558H847V559H850V558H855V558H860V557H863V556H866V557H872V557H878V557H881V556H885V557H891V556H893V556H896V556H899V556H902V556H908V556H910V556H913V556H916V556H919V556H924V555H927V556H933V554H936V555H941V555H944V554H950V554H954V554H959V555H961V555H963V554H967V555H969V554H971V553H977V553H980V553H984V554H987V553H992V553H995V553H1001V557H995V558H992V558H987V557H984V558H980V558H977V558H971V558H969V558H967V558H963V558H961V559H959V559H954V558H950V559H944V559H941V559H936V558H933V559H927V559H924V560H919V560H916V560H913V560H910V560H908V560H902V560H899V560H896V560H893V560H891V561H885V561H881V561H878V561H872V561H866V561H863V561H860V562H855V561H850V562H847V562H845V562H839V562H836V563H834V562H831V563H829V563H827V563H821V564H818V564H812V564H809V564H806V565H803V564H800V565H795V565H789V566H783V566H777V568H772V568H769V570H766V569H765V575H764V576H763V577H762V577H761Z" fill="#ff0000" shape-rendering="crispEdges"/><path d="M761 571H762V570H763V570H764V570H765V569H766V569H772V567H777V567H780V566H783V566H787V565H792V564H797V564H800V563H803V563H806V563H808V563H811V563H817V562H821V563H826V563H831V561H833V561H837V561H843V562H846V561H849V561H853V561H856V561H859V560H863V561H867V561H870V560H873V561H876V560H882V560H885V559H890V559H893V559H895V559H900V560H903V559H906V559H912V559H917V559H921V559H927V559H929V558H931V558H936V558H940V559H945V558H948V558H952V557H955V558H959V558H965V557H968V557H974V558H978V557H980V556H985V557H988V556H991V557H996V557H999V556H1001V559H999V559H996V559H991V559H988V559H985V559H980V559H978V560H974V559H968V560H965V561H959V561H955V560H952V560H948V560H945V561H940V560H936V561H931V561H929V561H927V562H921V561H917V561H912V562H906V561H903V562H900V561H895V561H893V562H890V561H885V562H882V562H876V563H873V563H870V563H867V563H863V563H859V564H856V564H853V564H849V563H846V564H843V563H837V564H833V564H831V565H826V565H821V565H817V566H811V566H808V566H806V566H803V566H800V566H797V567H792V567H787V568H783V568H780V569H777V570H772V571H766V572H765V579H764V579H763V578H762V579H761Z" fill="#ff00ff" shape-rendering="crispEdges"/><rect x="761" y="210" width="4" height="4" fill="#ffa500"/><rect x="760" y="201" width="1" height="3" fill="#ffc0cb"/><rect x="761" y="220" width="4" height="4" fill="#da70d6"/><rect x="760" y="212" width="1" height="3" fill="#ffffff"/><rect x="761" y="226" width="4" height="4" fill="#eee8aa"/><rect x="760" y="219" width="1" height="3" fill="#ffe4b5"/><rect x="761" y="236" width="4" height="4" fill="#98fb98"/><rect x="760" y="227" width="1" height="3" fill="#ffc0cb"/><rect x="761" y="245" width="4" height="4" fill="#afeeee"/><rect x="760" y="238" width="1" height="3" fill="#98fb98"/><rect x="761" y="254" width="4" height="4" fill="#db7093"/><rect x="760" y="246" width="1" height="3" fill="#98fb98"/><rect x="761" y="266" width="4" height="4" fill="#ffefd5"/><rect x="760" y="259" width="1" height="3" fill="#ffffff"/><rect x="761" y="278" width="4" height="4" fill="#cd853f"/><rect x="760" y="269" width="1" height="3" fill="#afeeee"/><rect x="761" y="289" width="4" height="4" fill="#ffc0cb"/><rect x="760" y="281" width="1" height="3" fill="#afeeee"/><rect x="761" y="301" width="4" height="4" fill="#b0e0e6"/><rect x="760" y="292" width="1" height="3" fill="#98fb98"/><rect x="761" y="314" width="4" height="4" fill="#800080"/><rect x="760" y="309" width="1" height="3" fill="#ffc0cb"/><rect x="761" y="327" width="4" height="4" fill="#ff0000"/><rect x="760" y="323" width="1" height="3" fill="#98fb98"/><rect x="761" y="341" width="4" height="4" fill="#bc8f8f"/><rect x="760" y="332" width="1" height="3" fill="#ffe4b5"/><rect x="761" y="354" width="4" height="4" fill="#4169e1"/><rect x="760" y="350" width="1" height="3" fill="#afeeee"/><rect x="761" y="369" width="4" height="4" fill="#8b4513"/><rect x="760" y="362" width="1" height="3" fill="#ffc0cb"/><rect x="761" y="381" width="4" height="4" fill="#fa8072"/><rect x="760" y="377" width="1" height="3" fill="#ffe4b5"/><rect x="761" y="393" width="4" height="4" fill="#2e8b57"/><rect x="760" y="388" width="1" height="3" fill="#ffc0cb"/><rect x="761" y="407" width="4" height="4" fill="#fff5ee"/><rect x="760" y="400" width="1" height="3" fill="#ffe4b5"/><rect x="761" y="417" width="4" height="4" fill="#a0522d"/><rect x="760" y="408" width="1" height="3" fill="#98fb98"/><rect x="761" y="431" width="4" height="4" fill="#c0c0c0"/><rect x="760" y="424" width="1" height="3" fill="#98fb98"/><rect x="761" y="442" width="4" height="4" fill="#87ceeb"/><rect x="760" y="435" width="1" height="3" fill="#ffc0cb"/><rect x="761" y="455" width="4" height="4" fill="#6a5acd"/><rect x="760" y="450" width="1" height="3" fill="#ffc0cb"/><rect x="761" y="469" width="4" height="4" fill="#708090"/><rect x="760" y="461" width="1" height="3" fill="#ffffff"/><rect x="761" y="480" width="4" height="4" fill="#fffafa"/><rect x="760" y="476" width="1" height="3" fill="#98fb98"/><rect x="761" y="490" width="4" height="4" fill="#00ff7f"/><rect x="760" y="481" width="1" height="3" fill="#ffc0cb"/><rect x="761" y="499" width="4" height="4" fill="#4682b4"/><rect x="760" y="490" width="1" height="3" fill="#98fb98"/><rect x="761" y="505" width="4" height="4" fill="#d2b48c"/><rect x="760" y="497" width="1" height="3" fill="#ffffff"/><rect x="761" y="515" width="4" height="4" fill="#008080"/><rect x="760" y="509" width="1" height="3" fill="#ffe4b5"/><rect x="761" y="524" width="4" height="4" fill="#d8bfd8"/><rect x="760" y="520" width="1" height="3" fill="#98fb98"/><rect x="761" y="533" width="4" height="4" fill="#ff6347"/><rect x="760" y="529" width="1" height="3" fill="#afeeee"/><rect x="761" y="537" width="4" height="4" fill="#40e0d0"/><rect x="760" y="530" width="1" height="3" fill="#98fb98"/><rect x="761" y="544" width="4" height="4" fill="#ee82ee"/><rect x="760" y="540" width="1" height="3" fill="#98fb98"/><rect x="761" y="551" width="4" height="4" fill="#c71585"/><rect x="760" y="547" width="1" height="3" fill="#ffc0cb"/><rect x="761" y="556" width="4" height="4" fill="#f5deb3"/><rect x="760" y="547" width="1" height="3" fill="#ffc0cb"/><rect x="761" y="560" width="4" height="4" fill="#ffffff"/><rect x="760" y="556" width="1" height="3" fill="#afeeee"/><rect x="761" y="567" width="4" height="4" fill="#ffff00"/><rect x="760" y="560" width="1" height="3" fill="#98fb98"/><rect x="761" y="571" width="4" height="4" fill="#9acd32"/><rect x="760" y="565" width="1" height="3" fill="#ffffff"/><rect x="761" y="573" width="4" height="4" fill="#ffff00"/><rect x="760" y="565" width="1" height="3" fill="#afeeee"/><rect x="761" y="575" width="4" height="4" fill="#00ff00"/><rect x="760" y="570" width="1" height="3" fill="#afeeee"/><rect x="761" y="577" width="4" height="4" fill="#00ffff"/><rect x="760" y="569" width="1" height="3" fill="#ffc0cb"/><rect x="761" y="579" width="4" height="4" fill="#ff0000"/><rect x="760" y="574" width="1" height="3" fill="#ffe4b5"/><rect x="876" y="159" width="3" height="2" fill="#c71585"/><rect x="840" y="158" width="4" height="3" fill="#48d1cc"/><rect x="902" y="158" width="5" height="3" fill="#3cb371"/><rect x="927" y="163" width="2" height="2" fill="#ba55d3"/><rect x="798" y="160" width="5" height="3" fill="#7b68ee"/><rect x="840" y="159" width="3" height="3" fill="#c71585"/><rect x="937" y="164" width="4" height="3" fill="#00fa9a"/><rect x="778" y="159" width="2" height="3" fill="#00fa9a"/><rect x="848" y="163" width="6" height="2" fill="#48d1cc"/><rect x="882" y="160" width="5" height="2" fill="#00fa9a"/><rect x="946" y="161" width="3" height="1" fill="#ba55d3"/><rect x="805" y="161" width="4" height="2" fill="#c71585"/><rect x="865" y="164" width="4" height="1" fill="#3cb371"/><rect x="866" y="160" width="2" height="2" fill="#00fa9a"/><rect x="887" y="161" width="5" height="3" fill="#00fa9a"/><rect x="814" y="161" width="2" height="1" fill="#c71585"/><rect x="968" y="163" width="6" height="2" fill="#ba55d3"/><rect x="776" y="157" width="2" height="2" fill="#ba55d3"/><rect x="986" y="157" width="5" height="2" fill="#00fa9a"/><rect x="831" y="165" width="3" height="3" fill="#3cb371"/><rect x="937" y="165" width="5" height="1" fill="#ba55d3"/><rect x="823" y="165" width="2" height="2" fill="#3cb371"/><rect x="888" y="161" width="5" height="1" fill="#3cb371"/><rect x="858" y="161" width="6" height="1" fill="#7b68ee"/><rect x="832" y="164" width="3" height="3" fill="#c71585"/><rect x="837" y="165" width="3" height="3" fill="#48d1cc"/><rect x="861" y="161" width="3" height="3" fill="#7b68ee"/><rect x="937" y="161" width="4" height="3" fill="#ba55d3"/><rect x="974" y="157" width="6" height="3" fill="#c71585"/><rect x="972" y="160" width="5" height="1" fill="#48d1cc"/><rect x="879" y="165" width="6" height="1" fill="#00fa9a"/><rect x="856" y="160" width="5" height="1" fill="#c71585"/><rect x="879" y="161" width="2" height="1" fill="#00fa9a"/><rect x="789" y="157" width="5" height="2" fill="#3cb371"/><rect x="978" y="165" width="3" height="1" fill="#3cb371"/><rect x="911" y="162" width="5" height="3" fill="#3cb371"/><rect x="793" y="163" width="3" height="1" fill="#c71585"/><rect x="763" y="161" width="3" height="3" fill="#3cb371"/><rect x="792" y="164" width="6" height="1" fill="#7b68ee"/><rect x="962" y="160" width="2" height="1" fill="#48d1cc"/><rect x="977" y="157" width="3" height="2" fill="#3cb371"/><rect x="982" y="164" width="3" height="3" fill="#48d1cc"/><rect x="779" y="157" width="3" height="2" fill="#00fa9a"/><rect x="993" y="160" width="4" height="3" fill="#7b68ee"/><rect x="828" y="160" width="2" height="3" fill="#ba55d3"/><rect x="961" y="163" width="5" height="3" fill="#ba55d3"/><rect x="905" y="157" width="4" height="3" fill="#3cb371"/><rect x="876" y="164" width="2" height="3" fill="#c71585"/><rect x="956" y="157" width="3" height="3" fill="#48d1cc"/><rect x="886" y="163" width="2" height="3" fill="#3cb371"/><rect x="766" y="161" width="2" height="3" fill="#3cb371"/><rect x="956" y="165" width="5" height="2" fill="#ba55d3"/><rect x="858" y="162" width="4" height="3" fill="#3cb371"/><rect x="866" y="163" width="6" height="3" fill="#7b68ee"/><rect x="812" y="157" width="5" height="3" fill="#48d1cc"/><rect x="908" y="159" width="4" height="1" fill="#7b68ee"/><rect x="872" y="162" width="5" height="2" fill="#ba55d3"/><rect x="918" y="164" width="5" height="3" fill="#00fa9a"/><rect x="847" y="160" width="6" height="3" fill="#c71585"/><rect x="880" y="157" width="6" height="1" fill="#3cb371"/><rect x="873" y="158" width="6" height="3" fill="#00fa9a"/><rect x="856" y="161" width="2" height="3" fill="#c71585"/><rect x="780" y="160" width="6" height="1" fill="#3cb371"/><rect x="934" y="160" width="4" height="3" fill="#3cb371"/><rect x="822" y="159" width="5" height="2" fill="#3cb371"/><rect x="891" y="163" width="2" height="2" fill="#48d1cc"/><rect x="926" y="161" width="2" height="3" fill="#3cb371"/><rect x="992" y="161" width="5" height="2" fill="#48d1cc"/><rect x="966" y="160" width="5" height="1" fill="#00fa9a"/><rect x="777" y="163" width="3" height="1" fill="#7b68ee"/><path d="M761 569H762V569H763V569H764V569H765V569H766V568H770V567H773V567H776V567H779V566H781V565H784V565H788V565H791V565H797V564H802V563H804V563H810V563H812V563H817V563H823V562H829V561H834V561H837V562H839V561H843V561H846V561H848V561H850V561H853V560H859V560H864V561H868V562H874V560H877V560H880V560H882V560H885V561H891V560H897V561H903V560H906V560H908V559H912V560H917V559H923V560H926V560H928V560H931V560H934V559H938V559H943V559H949V559H951V558H956V559H962V558H968V559H973V559H978V558H980V557H983V559H987V559H993V559H999V557H1001V559H999V560H993V560H987V560H983V559H980V560H978V560H973V560H968V560H962V560H956V560H951V560H949V561H943V561H938V561H934V561H931V562H928V561H926V561H923V561H917V562H912V561H908V562H906V562H903V562H897V561H891V563H885V562H882V562H880V562H877V562H874V563H868V563H864V562H859V562H853V563H850V562H848V563H846V563H843V563H839V563H837V563H834V563H829V563H823V564H817V565H812V564H810V564H804V565H802V565H797V566H791V566H788V567H784V567H781V568H779V568H776V569H773V568H770V569H766V570H765V572H764V573H763V572H762V572H761Z" fill="#ff00ff" shape-rendering="crispEdges"/><path d="M761 569H762V569H763V569H764V568H765V570H766V569H768V568H770V568H773V568H777V566H779V567H782V565H787V565H793V564H798V565H802V564H807V564H813V563H816V564H819V564H822V563H824V563H830V562H833V562H836V562H841V562H845V563H851V563H855V561H859V562H865V561H871V562H876V561H880V562H882V561H886V561H890V562H895V561H898V561H901V560H904V561H909V561H912V561H916V561H921V560H926V561H929V561H931V560H936V559H940V559H943V559H946V560H949V559H951V559H954V559H957V560H960V560H963V559H966V558H972V559H977V559H979V558H982V558H988V558H990V558H992V558H997V558H1001V561H997V561H992V561H990V561H988V560H982V561H979V561H977V561H972V561H966V562H963V562H960V562H957V561H954V561H951V562H949V562H946V561H943V562H940V562H936V562H931V563H929V563H926V562H921V563H916V563H912V564H909V563H904V563H901V563H898V563H895V564H890V563H886V564H882V564H880V563H876V564H871V563H865V565H859V564H855V565H851V566H845V564H841V565H836V565H833V565H830V566H824V566H822V566H819V566H816V565H813V567H807V566H802V567H798V567H793V567H787V568H782V569H779V569H777V570H773V571H770V570H768V571H766V572H765V573H764V573H763V574H762V574H761Z" fill="#a0522d" shape-rendering="crispEdges"/><path d="M761 572H762V571H763V570H764V570H765V571H766V569H770V569H774V568H776V567H779V568H784V566H790V565H793V566H796V566H799V566H801V565H803V565H807V566H811V564H815V565H821V565H824V565H827V564H830V564H834V564H839V564H842V564H844V564H849V563H852V563H857V563H862V563H866V564H869V563H871V562H875V562H878V563H880V563H882V563H886V562H889V562H892V563H896V562H901V562H906V561H910V561H913V562H917V561H922V561H924V561H926V561H928V562H930V561H936V562H939V561H941V562H944V561H947V561H951V561H955V560H961V560H964V561H967V560H973V561H975V560H978V560H984V561H987V560H993V560H995V560H998V560H1001V562H998V562H995V561H993V563H987V563H984V562H978V562H975V563H973V562H967V563H964V563H961V562H955V563H951V563H947V563H944V564H941V563H939V564H936V563H930V564H928V564H926V563H924V563H922V563H917V564H913V564H910V563H906V564H901V564H896V565H892V564H889V564H886V565H882V564H880V565H878V564H875V564H871V565H869V566H866V564H862V566H857V565H852V565H849V566H844V566H842V566H839V566H834V566H830V566H827V567H824V567H821V567H815V566H811V568H807V567H803V567H801V568H799V568H796V568H793V568H790V568H784V570H779V569H776V571H774V570H770V572H766V572H765V574H764V574H763V575H762V576H761Z" fill="#ffffff" shape-rendering="crispEdges"/><path d="M761 572H762V572H763V571H764V572H765V572H766V571H769V571H772V570H777V569H782V568H785V568H789V567H792V568H798V567H801V567H803V567H806V567H812V567H815V566H819V566H825V566H829V567H831V566H834V565H840V566H846V566H848V566H850V565H853V565H859V565H861V564H864V564H867V564H869V565H875V564H877V565H883V564H888V563H893V564H895V564H901V564H904V563H907V564H913V563H915V564H918V563H923V564H927V564H932V563H938V563H942V563H947V563H950V562H955V562H957V562H963V562H966V562H971V562H977V562H983V561H986V562H988V563H993V562H996V561H998V562H1001V564H998V563H996V564H993V564H988V564H986V563H983V564H977V564H971V564H966V564H963V564H957V564H955V564H950V564H947V565H942V565H938V565H932V566H927V566H923V565H918V565H915V565H913V566H907V565H904V566H901V566H895V566H893V566H888V565H883V567H877V566H875V567H869V566H867V566H864V566H861V566H859V567H853V567H850V568H848V568H846V568H840V567H834V568H831V568H829V569H825V568H819V568H815V568H812V568H806V569H803V569H801V569H798V570H792V569H789V571H785V570H782V571H777V572H772V573H769V573H766V574H765V576H764V575H763V576H762V577H761Z" fill="#4169e1" shape-rendering="crispEdges"/><path d="M761 573H762V574H763V573H764V573H765V572H766V573H770V572H774V572H778V570H782V570H785V569H788V570H793V569H796V568H802V569H805V568H811V569H814V568H818V568H822V567H824V567H827V568H832V567H834V567H837V567H841V568H845V568H849V566H853V566H859V566H862V566H868V566H872V566H875V565H881V566H883V565H889V565H895V565H897V566H903V566H905V565H911V565H914V565H917V565H923V564H926V565H929V564H933V564H938V566H941V564H944V564H946V564H950V564H953V564H956V565H960V564H962V565H964V565H968V564H972V563H976V563H979V564H982V564H985V563H988V563H993V563H995V563H1001V565H995V565H993V564H988V564H985V566H982V566H979V565H976V565H972V566H968V567H964V567H962V566H960V566H956V565H953V565H950V566H946V565H944V566H941V567H938V565H933V566H929V567H926V566H923V566H917V566H914V566H911V566H905V567H903V567H897V566H895V566H889V567H883V567H881V567H875V568H872V568H868V568H862V568H859V568H853V568H849V569H845V569H841V569H837V569H834V569H832V569H827V568H824V569H822V569H818V569H814V570H811V570H805V571H802V570H796V571H793V571H788V571H785V572H782V572H778V573H774V574H770V574H766V575H765V577H764V577H763V577H762V577H761Z" fill="#c0c0c0" shape-rendering="crispEdges"/><path d="M761 574H762V575H763V574H764V574H765V573H766V573H771V571H775V572H777V571H780V570H785V571H790V570H793V570H796V569H799V570H802V569H804V569H807V569H810V569H815V569H821V568H826V568H829V568H835V567H838V568H841V569H844V567H850V567H853V567H855V567H860V567H865V568H868V566H873V566H876V566H879V567H884V566H887V567H890V567H892V566H894V566H900V566H904V566H907V566H912V566H915V566H918V567H920V566H923V567H925V566H930V565H932V565H935V566H938V566H944V565H949V566H954V565H956V565H961V565H964V565H967V565H970V564H973V565H976V565H979V565H982V564H985V565H988V564H991V564H995V563H1000V563H1001V567H1000V567H995V567H991V567H988V568H985V568H982V568H979V568H976V568H973V567H970V569H967V568H964V568H961V568H956V568H954V569H949V569H944V569H938V568H935V568H932V569H930V569H925V569H923V569H920V569H918V569H915V569H912V569H907V569H904V570H900V570H894V569H892V570H890V569H887V569H884V570H879V569H876V570H873V569H868V570H865V570H860V570H855V569H853V570H850V570H844V571H841V571H838V570H835V570H829V571H826V571H821V572H815V572H810V572H807V572H804V572H802V572H799V572H796V574H793V573H790V574H785V573H780V573H777V575H775V574H771V576H766V576H765V579H764V578H763V580H762V579H761Z" fill="#87ceeb" shape-rendering="crispEdges"/><path d="M761 577H762V576H763V575H764V575H765V575H766V574H770V574H772V574H777V573H782V573H785V573H788V571H793V572H795V571H801V571H805V572H807V572H811V572H814V571H817V570H819V571H825V570H828V570H832V569H837V569H840V570H845V570H847V570H849V569H852V569H857V569H863V569H869V569H872V569H875V568H881V569H884V568H890V569H895V568H900V568H903V569H906V568H910V568H915V568H917V567H923V568H929V567H933V568H936V569H942V568H946V567H952V567H956V568H960V568H963V567H966V568H970V568H973V567H976V568H980V568H985V567H987V566H990V567H993V567H996V567H1001V569H996V569H993V569H990V568H987V568H985V569H980V569H976V568H973V569H970V569H966V568H963V570H960V569H956V569H952V568H946V570H942V570H936V569H933V569H929V569H923V569H917V570H915V570H910V570H906V570H903V569H900V570H895V571H890V570H884V570H881V570H875V570H872V571H869V570H863V570H857V570H852V570H849V571H847V572H845V572H840V571H837V571H832V571H828V572H825V572H819V571H817V572H814V573H811V573H807V573H805V572H801V573H795V573H793V573H788V574H785V574H782V575H777V576H772V575H770V575H766V576H765V579H764V578H763V579H762V580H761Z" fill="#6a5acd" shape-rendering="crispEdges"/><path d="M761 577H762V576H763V575H764V576H765V576H766V575H769V574H772V574H778V574H780V573H786V572H789V573H792V572H798V572H803V571H808V571H812V571H815V571H820V570H822V571H825V571H829V571H835V570H839V571H842V570H848V570H850V570H853V570H856V569H859V570H862V569H865V569H869V570H873V569H879V569H883V570H888V569H892V570H898V569H901V569H904V569H907V568H910V569H913V569H915V569H919V568H923V569H929V568H932V569H938V569H941V568H943V569H947V568H951V568H954V568H957V568H962V567H968V567H974V567H977V568H983V567H989V567H992V567H996V567H1001V570H996V570H992V570H989V570H983V571H977V570H974V570H968V570H962V572H957V571H954V571H951V572H947V571H943V571H941V572H938V571H932V571H929V572H923V571H919V572H915V572H913V572H910V571H907V572H904V573H901V572H898V572H892V571H888V573H883V572H879V572H873V573H869V572H865V572H862V573H859V573H856V573H853V573H850V573H848V573H842V573H839V573H835V574H829V574H825V574H822V573H820V573H815V574H812V574H808V574H803V575H798V575H792V576H789V575H786V576H780V578H778V577H772V577H769V578H766V579H765V581H764V580H763V581H762V581H761Z" fill="#708090" shape-rendering="crispEdges"/><path d="M761 577H762V577H763V576H764V576H765V576H766V576H769V576H771V575H775V575H781V574H783V574H786V574H791V573H794V573H800V573H802V572H804V572H809V573H815V572H817V572H823V572H829V571H834V571H839V571H841V571H846V571H850V572H852V571H855V571H857V570H860V571H866V571H871V570H874V570H876V570H879V570H882V570H885V571H890V570H894V570H897V571H903V570H906V570H908V570H912V570H915V570H920V570H925V569H928V570H932V570H936V569H938V569H940V570H944V569H947V568H950V568H952V569H955V569H960V570H966V569H970V568H976V568H980V569H985V568H987V569H990V568H995V569H998V569H1000V569H1001V572H1000V571H998V572H995V570H990V571H987V571H985V571H980V570H976V571H970V571H966V572H960V571H955V571H952V571H950V571H947V572H944V572H940V571H938V572H936V572H932V572H928V571H925V573H920V573H915V573H912V572H908V572H906V573H903V574H897V573H894V573H890V573H885V573H882V573H879V573H876V573H874V573H871V574H866V574H860V573H857V574H855V573H852V575H850V573H846V574H841V574H839V574H834V574H829V574H823V575H817V575H815V575H809V575H804V575H802V576H800V575H794V576H791V576H786V577H783V577H781V577H775V578H771V578H769V578H766V579H765V580H764V581H763V582H762V581H761Z" fill="#fffafa" shape-rendering="crispEdges"/><path d="M761 578H762V578H763V578H764V578H765V578H766V576H771V576H774V576H777V576H779V577H782V576H786V576H788V575H790V574H796V575H802V574H805V574H808V573H811V573H815V573H818V574H824V572H827V573H831V572H834V574H837V573H841V572H844V572H850V573H854V572H857V573H859V572H862V573H868V572H873V572H875V572H877V572H881V571H883V572H886V572H889V572H894V571H898V572H902V572H904V572H906V571H908V572H911V571H913V572H919V571H924V571H928V572H933V570H939V570H942V571H948V571H952V571H958V571H963V571H966V571H968V571H972V570H976V570H978V571H982V571H985V570H991V570H995V570H999V570H1001V573H999V572H995V572H991V573H985V573H982V573H978V572H976V573H972V573H968V573H966V573H963V573H958V574H952V574H948V573H942V573H939V573H933V574H928V573H924V573H919V575H913V573H911V575H908V573H906V575H904V574H902V575H898V574H894V575H889V574H886V575H883V573H881V575H877V575H875V574H873V575H868V576H862V575H859V575H857V574H854V575H850V575H844V574H841V575H837V576H834V575H831V575H827V575H824V577H818V575H815V576H811V575H808V577H805V577H802V577H796V577H790V577H788V578H786V579H782V579H779V579H777V579H774V579H771V579H766V581H765V582H764V582H763V582H762V582H761Z" fill="#00ff7f" shape-rendering="crispEdges"/><path d="M761 579H762V579H763V579H764V578H765V579H766V579H772V578H774V578H777V576H782V576H787V576H790V576H796V575H801V575H804V575H806V576H810V575H814V575H820V575H823V574H828V575H831V574H836V575H840V574H843V574H848V574H851V574H857V574H863V573H865V573H868V573H872V573H874V574H879V574H883V574H887V573H890V573H894V573H897V572H903V573H908V573H914V573H920V574H926V572H929V573H934V572H937V572H942V573H946V572H951V572H954V572H956V572H959V572H961V573H967V572H972V572H978V571H984V572H987V571H992V572H995V571H999V570H1001V572H999V573H995V573H992V573H987V574H984V573H978V574H972V574H967V575H961V574H959V574H956V574H954V574H951V574H946V575H942V574H937V574H934V574H929V574H926V575H920V575H914V575H908V575H903V574H897V575H894V575H890V575H887V575H883V576H879V576H874V575H872V575H868V576H865V575H863V576H857V576H851V576H848V576H843V576H840V577H836V575H831V577H828V576H823V578H820V577H814V577H810V577H806V577H804V577H801V577H796V578H790V578H787V579H782V578H777V580H774V580H772V581H766V581H765V582H764V582H763V583H762V582H761Z" fill="#4682b4" shape-rendering="crispEdges"/><path d="M761 579H762V580H763V580H764V580H765V580H766V578H772V578H774V578H779V577H785V576H789V576H794V576H797V576H803V577H806V576H809V576H812V575H817V575H820V575H824V575H827V574H832V575H834V576H840V576H843V575H848V574H853V574H858V574H863V574H868V574H872V574H877V575H882V574H884V573H886V575H892V574H898V574H901V574H903V574H907V574H911V574H914V574H917V573H920V573H923V574H926V573H931V573H934V573H936V573H939V574H944V573H946V573H950V574H953V573H958V573H960V573H966V572H972V573H978V573H981V572H986V573H989V572H994V572H1000V572H1001V575H1000V575H994V575H989V576H986V574H981V575H978V575H972V575H966V576H960V575H958V575H953V576H950V576H946V575H944V576H939V576H936V576H934V575H931V576H926V576H923V575H920V576H917V577H914V577H911V576H907V577H903V577H901V577H898V576H892V577H886V576H884V576H882V576H877V577H872V577H868V577H863V577H858V577H853V577H848V578H843V578H840V578H834V577H832V577H827V577H824V578H820V578H817V578H812V578H809V579H806V579H803V579H797V578H794V579H789V579H785V579H779V581H774V580H772V581H766V583H765V585H764V584H763V584H762V583H761Z" fill="#d2b48c" shape-rendering="crispEdges"/><path d="M761 582H762V581H763V581H764V580H765V581H766V581H768V580H773V579H777V579H781V579H785V579H788V579H791V578H795V578H799V578H805V578H808V577H810V578H812V578H817V577H819V577H821V577H823V577H828V577H831V577H835V576H840V576H842V577H847V577H850V576H854V577H857V577H863V577H865V576H871V576H875V576H879V576H882V576H888V576H891V575H894V576H897V575H901V576H904V575H907V575H910V576H913V576H915V575H917V575H921V575H925V575H928V575H930V575H932V575H935V576H941V574H944V575H949V575H953V574H956V575H962V575H967V574H973V574H978V575H982V575H988V574H994V574H996V573H1001V575H996V576H994V576H988V577H982V577H978V577H973V577H967V576H962V577H956V576H953V577H949V577H944V576H941V578H935V577H932V577H930V577H928V577H925V577H921V577H917V577H915V578H913V578H910V578H907V577H904V578H901V578H897V577H894V577H891V578H888V578H882V578H879V578H875V578H871V579H865V579H863V579H857V579H854V578H850V579H847V579H842V578H840V578H835V578H831V579H828V579H823V579H821V580H819V578H817V580H812V580H810V579H808V580H805V580H799V580H795V579H791V581H788V581H785V580H781V581H777V581H773V583H768V583H766V583H765V584H764V585H763V585H762V586H761Z" fill="#008080" shape-rendering="crispEdges"/><path d="M761 582H762V581H763V582H764V582H765V582H766V580H772V581H775V580H778V580H782V579H788V580H792V578H795V579H798V579H800V579H803V578H809V577H812V579H818V579H822V578H826V579H830V578H835V578H838V578H842V578H845V577H847V578H852V577H854V578H856V578H862V576H865V577H870V576H873V577H878V577H881V577H883V576H888V578H890V578H893V576H897V577H902V577H908V576H911V577H913V577H915V576H918V577H922V577H928V577H930V576H935V575H938V576H944V575H949V576H952V575H955V576H959V575H963V575H968V576H973V575H976V576H979V575H982V575H985V576H990V576H994V574H1000V575H1001V579H1000V577H994V578H990V579H985V577H982V578H979V579H976V578H973V578H968V577H963V577H959V578H955V578H952V578H949V577H944V579H938V578H935V579H930V579H928V579H922V580H918V578H915V580H913V579H911V579H908V579H902V580H897V579H893V580H890V580H888V579H883V580H881V579H878V580H873V579H870V579H865V579H862V580H856V580H854V580H852V581H847V580H845V581H842V580H838V580H835V581H830V581H826V580H822V582H818V581H812V580H809V581H803V582H800V582H798V582H795V581H792V582H788V582H782V582H778V582H775V584H772V583H766V584H765V586H764V586H763V586H762V587H761Z" fill="#d8bfd8" shape-rendering="crispEdges"/><path d="M761 583H762V582H763V582H764V582H765V582H766V583H769V581H772V580H775V581H777V581H781V580H783V581H788V579H793V579H799V580H803V580H805V578H810V578H813V579H815V579H817V578H819V578H821V578H827V579H831V578H834V579H840V579H845V578H851V578H855V578H860V578H866V578H870V578H874V577H878V578H883V578H885V579H887V577H890V577H894V577H896V577H901V577H903V577H905V578H910V577H916V578H920V577H923V576H926V577H928V577H931V577H934V578H939V577H944V577H947V578H951V577H954V576H959V577H965V576H969V577H973V576H977V576H979V576H981V576H984V576H989V577H994V577H1000V575H1001V578H1000V580H994V580H989V579H984V579H981V579H979V579H977V579H973V580H969V579H965V579H959V579H954V580H951V580H947V581H944V579H939V581H934V581H931V580H928V580H926V580H923V580H920V581H916V580H910V581H905V580H903V580H901V581H896V580H894V581H890V581H887V581H885V581H883V581H878V580H874V581H870V581H866V581H860V581H855V581H851V581H845V582H840V582H834V581H831V582H827V581H821V581H819V582H817V582H815V582H813V581H810V582H805V583H803V582H799V582H793V582H788V584H783V583H781V583H777V584H775V584H772V584H769V586H766V586H765V588H764V587H763V587H762V588H761Z" fill="#ff6347" shape-rendering="crispEdges"/><path d="M761 585H762V584H763V584H764V584H765V583H766V584H770V583H774V583H779V582H782V583H788V582H793V582H795V581H801V582H806V581H809V581H815V581H818V581H822V580H824V581H830V581H833V581H839V580H845V580H849V580H855V581H859V580H862V580H865V581H869V579H872V579H878V579H883V580H887V580H891V579H893V579H896V579H898V579H904V580H906V580H912V580H917V580H921V579H925V579H929V579H931V579H935V579H938V580H943V579H945V579H951V578H957V579H960V579H964V579H967V579H972V578H974V579H977V578H979V579H985V579H991V578H997V578H1001V580H997V580H991V581H985V581H979V580H977V581H974V580H972V581H967V581H964V580H960V581H957V580H951V581H945V580H943V582H938V580H935V581H931V580H929V581H925V581H921V582H917V582H912V582H906V582H904V581H898V581H896V581H893V581H891V582H887V582H883V581H878V581H872V581H869V582H865V581H862V582H859V583H855V582H849V582H845V582H839V583H833V583H830V582H824V582H822V583H818V583H815V583H809V584H806V584H801V583H795V584H793V584H788V584H782V584H779V585H774V584H770V586H766V585H765V588H764V587H763V588H762V589H761Z" fill="#40e0d0" shape-rendering="crispEdges"/><path d="M761 585H762V585H763V584H764V585H765V585H766V585H770V583H774V584H777V584H783V582H788V583H791V584H793V582H798V582H801V583H805V582H808V582H813V582H816V581H819V582H822V582H828V583H830V582H834V582H840V582H846V581H849V582H852V581H855V581H857V581H862V580H864V580H869V581H872V582H878V580H883V581H888V580H893V580H895V581H901V580H905V581H907V581H910V581H914V581H919V580H925V580H929V580H932V580H938V581H941V581H946V581H952V581H954V580H957V581H960V580H963V581H966V580H968V580H974V581H977V580H980V580H986V579H989V580H991V580H996V579H1001V581H996V582H991V583H989V581H986V581H980V582H977V583H974V582H968V582H966V583H963V582H960V583H957V582H954V583H952V583H946V583H941V582H938V582H932V582H929V583H925V582H919V583H914V583H910V582H907V583H905V582H901V583H895V582H893V582H888V583H883V583H878V583H872V583H869V583H864V583H862V583H857V583H855V583H852V584H849V583H846V585H840V584H834V584H830V585H828V584H822V585H819V583H816V584H813V584H808V584H805V585H801V584H798V584H793V585H791V586H788V585H783V586H777V586H774V586H770V587H766V587H765V589H764V588H763V589H762V590H761Z" fill="#ee82ee" shape-rendering="crispEdges"/><path d="M761 586H762V585H763V587H764V587H765V585H766V585H772V586H778V584H780V584H785V584H789V585H792V584H796V584H802V584H805V583H808V583H812V583H815V583H817V583H820V584H825V584H828V583H831V584H837V583H842V583H847V584H852V582H856V584H860V583H863V584H868V583H872V583H875V583H878V583H882V582H886V582H889V583H895V582H899V582H905V582H908V582H912V583H917V582H919V582H922V582H928V582H931V582H936V582H940V582H943V582H949V582H955V582H961V581H966V582H969V581H974V582H977V581H982V582H986V582H989V581H991V581H994V581H1000V582H1001V584H1000V583H994V584H991V583H989V584H986V584H982V583H977V584H974V583H969V585H966V583H961V584H955V585H949V584H943V584H940V583H936V585H931V583H928V584H922V584H919V584H917V585H912V584H908V584H905V584H899V584H895V584H889V584H886V584H882V585H878V585H875V585H872V585H868V585H863V585H860V585H856V584H852V586H847V585H842V585H837V586H831V586H828V586H825V586H820V585H817V586H815V585H812V585H808V586H805V587H802V586H796V586H792V586H789V587H785V586H780V587H778V588H772V587H766V588H765V590H764V591H763V590H762V590H761Z" fill="#c71585" shape-rendering="crispEdges"/><path d="M761 588H762V587H763V587H764V588H765V587H766V587H772V586H778V587H780V586H783V586H788V587H790V586H793V586H795V586H800V585H805V586H807V586H810V585H813V585H815V585H820V585H823V585H827V586H830V585H832V585H837V585H840V584H845V585H851V585H856V584H862V584H864V585H870V585H872V585H876V584H881V584H886V584H888V584H893V584H895V585H899V584H904V584H907V584H910V583H913V584H916V583H919V584H922V584H927V583H931V584H934V584H936V584H939V583H942V583H945V583H949V584H954V584H956V583H959V583H965V582H968V584H970V583H973V584H977V583H983V583H987V583H992V583H998V583H1001V585H998V584H992V584H987V585H983V585H977V585H973V585H970V586H968V584H965V584H959V585H956V585H954V586H949V584H945V585H942V585H939V586H936V585H934V585H931V585H927V585H922V585H919V585H916V585H913V585H910V586H907V586H904V585H899V586H895V586H893V585H888V585H886V586H881V586H876V586H872V586H870V586H864V586H862V586H856V586H851V587H845V586H840V586H837V586H832V587H830V587H827V586H823V587H820V586H815V587H813V586H810V587H807V587H805V586H800V587H795V587H793V587H790V588H788V587H783V588H780V588H778V588H772V589H766V588H765V591H764V590H763V590H762V591H761Z" fill="#f5deb3" shape-rendering="crispEdges"/><path d="M761 588H762V589H763V589H764V588H765V588H766V588H772V588H776V587H782V587H788V586H790V587H792V587H795V586H797V587H803V587H806V587H812V587H818V586H824V586H829V587H834V587H837V585H840V585H845V587H848V585H852V586H855V587H861V586H864V586H868V586H871V585H876V585H878V585H880V586H883V586H886V586H889V585H891V586H896V586H902V586H908V586H913V586H917V585H923V585H926V585H930V584H936V585H940V585H946V586H950V585H954V586H959V586H962V585H964V585H967V586H972V584H978V586H980V584H982V585H985V584H987V586H992V584H995V584H997V584H1001V586H997V585H995V586H992V587H987V586H985V586H982V585H980V587H978V585H972V587H967V587H964V587H962V587H959V587H954V586H950V587H946V587H940V586H936V586H930V586H926V586H923V586H917V587H913V588H908V587H902V587H896V587H891V586H889V587H886V587H883V587H880V587H878V586H876V587H871V588H868V587H864V587H861V588H855V588H852V587H848V588H845V587H840V587H837V588H834V588H829V587H824V587H818V588H812V588H806V589H803V588H797V588H795V589H792V588H790V588H788V589H782V588H776V590H772V589H766V589H765V592H764V592H763V593H762V592H761Z" fill="#ffffff" shape-rendering="crispEdges"/><path d="M761 590H762V590H763V589H764V589H765V590H766V588H769V589H771V588H776V589H780V588H783V589H787V588H793V587H796V588H802V587H805V587H809V588H812V588H814V588H817V588H821V588H824V587H828V587H831V587H833V587H835V587H838V587H843V587H846V587H851V586H857V587H863V586H868V588H871V587H874V586H877V587H880V587H883V587H885V587H888V586H893V587H898V586H903V586H907V587H910V587H914V587H920V587H924V587H929V586H932V586H937V587H942V586H944V586H947V586H952V586H957V587H962V586H965V587H968V586H974V585H979V586H983V587H986V585H989V585H994V587H998V586H1001V588H998V588H994V587H989V587H986V589H983V588H979V588H974V588H968V589H965V589H962V589H957V588H952V588H947V588H944V588H942V588H937V588H932V588H929V589H924V589H920V589H914V589H910V589H907V588H903V588H898V589H893V588H888V589H885V589H883V589H880V589H877V588H874V590H871V590H868V588H863V589H857V588H851V589H846V589H843V589H838V589H835V589H833V589H831V589H828V589H824V590H821V589H817V589H814V590H812V590H809V589H805V589H802V590H796V589H793V590H787V591H783V590H780V591H776V590H771V591H769V590H766V592H765V593H764V593H763V594H762V594H761Z" fill="#ffff00" shape-rendering="crispEdges"/><path d="M761 591H762V591H763V590H764V591H765V590H766V590H771V590H775V590H781V589H785V590H788V588H793V589H795V588H798V590H800V588H806V589H812V589H814V589H817V588H819V589H823V588H826V588H829V589H835V589H840V588H845V589H850V588H852V588H854V589H859V589H862V588H865V589H869V588H875V589H880V588H886V588H889V587H892V588H898V588H901V588H903V589H905V589H908V588H910V588H915V588H921V587H927V588H932V588H937V587H942V589H948V588H954V587H959V589H961V587H965V587H969V588H974V587H976V588H980V588H986V588H989V588H991V587H995V587H1000V588H1001V589H1000V589H995V589H991V589H989V589H986V589H980V589H976V589H974V589H969V588H965V588H961V590H959V589H954V590H948V590H942V589H937V589H932V590H927V589H921V589H915V589H910V590H908V590H905V591H903V589H901V589H898V590H892V589H889V590H886V590H880V591H875V589H869V590H865V590H862V590H859V591H854V589H852V590H850V590H845V589H840V591H835V590H829V589H826V590H823V590H819V589H817V591H814V591H812V591H806V590H800V591H798V590H795V590H793V590H788V592H785V591H781V591H775V592H771V592H766V591H765V595H764V593H763V595H762V594H761Z" fill="#9acd32" shape-rendering="crispEdges"/><path d="M761 591H762V590H763V590H764V590H765V590H766V591H772V590H774V590H777V589H781V589H784V590H789V589H793V590H796V589H802V590H804V589H807V589H810V590H812V589H814V590H816V589H822V589H824V589H827V589H829V589H833V588H836V590H839V589H841V588H844V589H846V589H851V588H854V588H857V588H860V588H865V589H871V588H877V589H883V588H886V588H889V589H894V589H899V587H905V588H908V588H914V588H917V588H921V588H923V587H926V588H930V588H933V589H936V588H941V587H947V588H950V587H953V588H958V588H960V588H965V587H968V589H970V588H973V588H978V587H980V588H983V587H988V588H991V588H994V588H999V589H1001V591H999V591H994V590H991V591H988V590H983V591H980V590H978V591H973V591H970V592H968V591H965V591H960V591H958V591H953V590H950V591H947V590H941V591H936V592H933V591H930V592H926V591H923V591H921V591H917V591H914V591H908V592H905V590H899V592H894V592H889V591H886V591H883V592H877V591H871V591H865V592H860V591H857V591H854V591H851V592H846V592H844V591H841V592H839V592H836V591H833V592H829V592H827V592H824V592H822V592H816V593H814V592H812V592H810V592H807V592H804V593H802V592H796V593H793V592H789V592H784V593H781V592H777V593H774V592H772V593H766V592H765V595H764V595H763V595H762V596H761Z" fill="#00ff00" shape-rendering="crispEdges"/><path d="M761 591H762V592H763V591H764V591H765V592H766V592H768V592H773V591H778V590H783V591H788V590H790V591H793V590H798V591H804V590H807V591H810V590H813V591H816V590H822V589H825V591H831V590H836V590H839V591H842V590H847V590H853V590H857V589H861V590H863V590H868V590H870V590H873V591H878V589H881V589H884V590H886V589H889V589H894V589H900V589H902V589H904V589H909V590H912V589H914V590H917V589H921V590H925V589H929V589H934V589H937V590H939V589H942V590H944V590H949V590H954V590H956V589H961V590H967V589H973V589H979V589H985V589H988V590H994V589H998V589H1001V591H998V592H994V593H988V592H985V593H979V592H973V592H967V592H961V592H956V593H954V593H949V592H944V593H942V592H939V593H937V593H934V592H929V592H925V593H921V592H917V593H914V592H912V593H909V592H904V592H902V592H900V592H894V592H889V593H886V593H884V592H881V592H878V593H873V593H870V592H868V593H863V593H861V592H857V593H853V593H847V593H842V593H839V592H836V593H831V594H825V593H822V593H816V593H813V593H810V593H807V593H804V594H798V593H793V593H790V593H788V593H783V593H778V594H773V595H768V595H766V595H765V596H764V597H763V597H762V597H761Z" fill="#00ffff" shape-rendering="crispEdges"/><path d="M761 593H762V593H763V593H764V593H765V593H766V592H772V592H775V592H780V593H786V592H789V592H792V592H796V592H798V593H804V592H807V592H810V592H816V592H819V591H822V593H825V591H830V591H834V591H837V591H841V592H847V593H851V592H856V591H861V592H863V592H866V592H871V592H875V591H877V592H881V591H883V592H886V591H890V590H894V591H897V591H900V591H902V592H906V591H909V591H912V591H914V592H918V592H922V591H928V592H932V591H934V592H938V592H941V591H943V590H947V592H951V592H954V591H960V591H963V591H967V592H969V591H973V591H976V591H978V591H983V591H987V590H993V591H996V591H999V591H1001V594H999V593H996V594H993V593H987V594H983V593H978V594H976V594H973V594H969V594H967V593H963V594H960V593H954V594H951V594H947V593H943V594H941V594H938V595H934V594H932V594H928V593H922V594H918V594H914V593H912V593H909V593H906V594H902V593H900V593H897V593H894V593H890V593H886V594H883V593H881V595H877V593H875V594H871V594H866V594H863V595H861V594H856V594H851V595H847V594H841V594H837V594H834V594H830V594H825V595H822V594H819V595H816V595H810V595H807V594H804V595H798V594H796V595H792V594H789V594H786V596H780V595H775V595H772V595H766V596H765V598H764V597H763V598H762V598H761Z" fill="#ff0000" shape-rendering="crispEdges"/><path d="M761 595H762V594H763V594H764V594H765V595H766V595H768V595H773V594H776V595H780V595H784V594H786V594H789V594H794V593H799V593H803V593H807V594H812V594H816V594H822V593H825V592H831V593H833V593H835V594H840V594H846V593H850V593H855V593H861V594H864V593H867V593H871V593H874V593H878V592H884V593H886V594H890V593H893V592H895V592H898V592H903V592H907V593H909V593H911V594H917V593H920V593H924V592H927V593H929V592H931V593H937V593H941V593H944V593H947V593H950V593H954V592H959V593H964V593H966V592H972V593H974V592H978V592H982V593H984V594H987V593H992V593H994V593H998V593H1001V595H998V595H994V595H992V594H987V595H984V594H982V594H978V593H974V594H972V594H966V594H964V594H959V594H954V595H950V594H947V594H944V594H941V595H937V595H931V594H929V595H927V594H924V595H920V594H917V595H911V594H909V595H907V594H903V594H898V594H895V594H893V594H890V595H886V594H884V594H878V594H874V594H871V594H867V595H864V595H861V595H855V594H850V595H846V595H840V595H835V595H833V595H831V594H825V595H822V595H816V596H812V595H807V595H803V594H799V594H794V595H789V595H786V596H784V596H780V596H776V595H773V596H768V596H766V596H765V598H764V597H763V598H762V598H761Z" fill="#ff00ff" shape-rendering="crispEdges"/><path d="M761 596H762V596H763V596H764V594H765V595H766V595H772V596H774V595H778V595H781V595H786V594H789V595H793V595H796V593H799V594H802V594H808V594H811V594H814V595H819V595H823V594H826V595H829V594H833V594H835V593H837V594H841V594H844V594H846V593H848V595H852V594H856V594H859V594H864V594H868V594H871V594H874V593H877V594H880V594H886V593H888V594H893V594H898V593H903V594H906V594H912V594H915V594H917V594H920V594H924V594H929V594H932V593H938V594H941V594H946V594H949V593H952V593H954V594H959V593H962V595H965V593H971V594H974V594H980V594H982V594H984V595H987V593H991V594H995V593H998V594H1001V595H998V595H995V595H991V595H987V597H984V596H982V596H980V596H974V596H971V595H965V596H962V595H959V595H954V596H952V595H949V596H946V596H941V596H938V595H932V596H929V596H924V596H920V596H917V596H915V596H912V595H906V595H903V595H898V596H893V596H888V595H886V595H880V596H877V596H874V596H871V597H868V596H864V595H859V596H856V596H852V596H848V595H846V596H844V596H841V596H837V596H835V596H833V596H829V596H826V596H823V596H819V596H814V597H811V597H808V596H802V596H799V596H796V597H793V597H789V597H786V596H781V597H778V597H774V598H772V597H766V597H765V598H764V600H763V599H762V600H761Z" fill="#0000ff" shape-rendering="crispEdges"/><path d="M761 597H762V597H763V596H764V596H765V596H766V596H770V595H774V596H777V596H780V595H783V595H787V596H790V595H796V596H800V595H804V595H806V595H808V596H812V596H818V595H820V595H822V596H824V595H827V594H832V594H836V595H838V595H840V594H846V595H849V594H855V595H857V594H860V595H864V595H867V595H870V596H873V594H875V595H877V595H880V595H885V595H888V595H891V595H894V596H899V595H904V595H908V595H912V595H918V595H921V595H923V594H926V596H930V594H932V594H934V595H937V594H940V594H944V595H950V595H953V595H956V595H959V594H963V594H969V594H972V594H975V595H978V594H981V595H985V595H989V594H992V594H998V595H1001V597H998V596H992V596H989V597H985V596H981V596H978V596H975V597H972V596H969V596H963V597H959V597H956V597H953V597H950V597H944V596H940V596H937V597H934V596H932V596H930V598H926V596H923V596H921V597H918V596H912V597H908V597H904V597H899V598H894V596H891V597H888V597H885V597H880V597H877V597H875V596H873V598H870V597H867V597H864V597H860V596H857V597H855V596H849V597H846V596H840V597H838V596H836V596H832V597H827V597H824V598H822V597H820V597H818V597H812V597H808V597H806V597H804V597H800V598H796V597H790V598H787V598H783V598H780V598H777V598H774V597H770V598H766V598H765V600H764V600H763V601H762V601H761Z" fill="#ffffff" shape-rendering="crispEdges"/><path d="M761 599H762V597H763V597H764V597H765V597H766V598H769V597H771V596H776V596H779V596H783V598H787V597H791V596H795V597H797V597H800V597H803V597H806V597H809V596H814V596H816V595H819V596H824V595H827V596H832V597H835V596H838V596H844V596H847V597H850V597H853V596H859V596H862V597H864V596H870V597H873V595H876V596H882V596H885V596H889V597H895V596H900V597H906V596H908V596H912V597H914V596H917V595H920V597H923V596H926V596H931V595H937V595H943V596H945V597H949V596H954V596H957V596H959V596H964V596H967V597H970V596H974V597H976V596H982V597H985V596H987V596H991V596H997V596H999V596H1001V598H999V598H997V597H991V598H987V598H985V599H982V598H976V598H974V598H970V599H967V598H964V598H959V598H957V598H954V598H949V599H945V598H943V598H937V598H931V598H926V598H923V599H920V598H917V599H914V599H912V598H908V598H906V599H900V599H895V599H889V597H885V598H882V598H876V597H873V599H870V598H864V598H862V598H859V598H853V598H850V599H847V598H844V598H838V597H835V599H832V598H827V598H824V598H819V598H816V598H814V598H809V599H806V599H803V598H800V599H797V599H795V598H791V599H787V599H783V598H779V598H776V599H771V600H769V600H766V600H765V601H764V601H763V601H762V602H761Z" fill="#ffe4c4" shape-rendering="crispEdges"/><rect x="846" y="599" width="2" height="1" fill="#ff00ff"/><rect x="929" y="594" width="1" height="1" fill="#00ff00"/><rect x="967" y="594" width="2" height="1" fill="#ffc0cb"/><rect x="946" y="594" width="3" height="1" fill="#ff00ff"/><rect x="947" y="598" width="1" height="1" fill="#ffc0cb"/><rect x="813" y="595" width="4" height="1" fill="#ffc0cb"/><rect x="939" y="598" width="3" height="1" fill="#0000ff"/><rect x="985" y="599" width="2" height="1" fill="#ff0000"/><rect x="883" y="596" width="1" height="1" fill="#ffc0cb"/><rect x="833" y="594" width="2" height="1" fill="#ff00ff"/><rect x="765" y="598" width="3" height="1" fill="#0000ff"/><rect x="884" y="599" width="2" height="1" fill="#ff00ff"/><rect x="946" y="599" width="4" height="1" fill="#00ff00"/><rect x="807" y="598" width="3" height="1" fill="#ff00ff"/><rect x="988" y="595" width="2" height="1" fill="#ff0000"/><rect x="867" y="599" width="1" height="1" fill="#00ffff"/><rect x="875" y="600" width="3" height="1" fill="#ffc0cb"/><rect x="932" y="594" width="1" height="1" fill="#00ff00"/><rect x="996" y="598" width="1" height="1" fill="#ff00ff"/><rect x="880" y="597" width="3" height="1" fill="#ff0000"/><rect x="921" y="597" width="3" height="1" fill="#ff0000"/><rect x="996" y="599" width="4" height="1" fill="#ffc0cb"/><rect x="878" y="600" width="2" height="1" fill="#0000ff"/><rect x="954" y="594" width="1" height="1" fill="#ff0000"/><rect x="839" y="595" width="2" height="1" fill="#ff00ff"/><rect x="966" y="600" width="1" height="1" fill="#ffc0cb"/><rect x="918" y="599" width="3" height="1" fill="#00ff00"/><rect x="780" y="598" width="4" height="1" fill="#0000ff"/><rect x="900" y="595" width="1" height="1" fill="#ff0000"/><rect x="876" y="598" width="3" height="1" fill="#0000ff"/><rect x="953" y="599" width="4" height="1" fill="#00ff00"/><rect x="773" y="594" width="2" height="1" fill="#ff00ff"/><rect x="804" y="597" width="3" height="1" fill="#ff0000"/><rect x="940" y="598" width="4" height="1" fill="#00ff00"/><rect x="868" y="595" width="2" height="1" fill="#ffc0cb"/><rect x="961" y="595" width="1" height="1" fill="#ff00ff"/><rect x="960" y="595" width="4" height="1" fill="#ff00ff"/><rect x="859" y="594" width="4" height="1" fill="#00ff00"/><rect x="813" y="594" width="4" height="1" fill="#0000ff"/><rect x="770" y="595" width="2" height="1" fill="#ffc0cb"/><rect x="824" y="599" width="4" height="1" fill="#0000ff"/><rect x="858" y="600" width="2" height="1" fill="#ffc0cb"/><rect x="898" y="595" width="3" height="1" fill="#0000ff"/><rect x="772" y="597" width="2" height="1" fill="#ff00ff"/><rect x="790" y="595" width="4" height="1" fill="#ffc0cb"/><rect x="766" y="598" width="4" height="1" fill="#0000ff"/><rect x="915" y="594" width="1" height="1" fill="#ff0000"/><rect x="993" y="600" width="3" height="1" fill="#0000ff"/><rect x="902" y="600" width="2" height="1" fill="#ff00ff"/><rect x="904" y="595" width="2" height="1" fill="#ffc0cb"/><rect x="767" y="599" width="3" height="1" fill="#00ff00"/><rect x="828" y="599" width="3" height="1" fill="#00ff00"/><rect x="827" y="597" width="3" height="1" fill="#ff00ff"/><rect x="927" y="595" width="3" height="1" fill="#0000ff"/><rect x="912" y="594" width="2" height="1" fill="#ff00ff"/><rect x="815" y="594" width="1" height="1" fill="#00ffff"/><rect x="813" y="597" width="1" height="1" fill="#ffc0cb"/><rect x="935" y="595" width="1" height="1" fill="#ffc0cb"/><rect x="819" y="597" width="3" height="1" fill="#00ff00"/><rect x="811" y="596" width="1" height="1" fill="#0000ff"/><rect x="973" y="599" width="3" height="1" fill="#00ff00"/><rect x="782" y="597" width="3" height="1" fill="#ff00ff"/><rect x="882" y="599" width="1" height="1" fill="#ff0000"/><rect x="881" y="600" width="4" height="1" fill="#ff00ff"/><rect x="957" y="599" width="1" height="1" fill="#ff00ff"/><rect x="801" y="598" width="3" height="1" fill="#00ff00"/><rect x="825" y="600" width="4" height="1" fill="#ff00ff"/><rect x="833" y="594" width="2" height="1" fill="#00ff00"/><rect x="906" y="594" width="3" height="1" fill="#00ff00"/><rect x="767" y="598" width="4" height="1" fill="#00ff00"/><rect x="848" y="594" width="3" height="1" fill="#ff00ff"/><rect x="839" y="597" width="4" height="1" fill="#00ff00"/><rect x="989" y="600" width="3" height="1" fill="#00ff00"/><rect x="961" y="598" width="4" height="1" fill="#ff00ff"/><rect x="869" y="596" width="3" height="1" fill="#0000ff"/><rect x="974" y="597" width="2" height="1" fill="#00ffff"/><rect x="975" y="595" width="3" height="1" fill="#ff0000"/><rect x="795" y="596" width="4" height="1" fill="#ff00ff"/><rect x="810" y="597" width="4" height="1" fill="#00ff00"/><rect x="776" y="595" width="2" height="1" fill="#ff0000"/><rect x="855" y="598" width="1" height="1" fill="#0000ff"/><rect x="939" y="595" width="3" height="1" fill="#ffc0cb"/><rect x="959" y="599" width="3" height="1" fill="#ffc0cb"/><rect x="984" y="600" width="1" height="1" fill="#ff00ff"/><rect x="931" y="597" width="1" height="1" fill="#ff00ff"/><rect x="901" y="598" width="2" height="1" fill="#0000ff"/><rect x="859" y="596" width="1" height="1" fill="#ffc0cb"/><rect x="849" y="594" width="2" height="1" fill="#ff00ff"/><rect x="957" y="594" width="3" height="1" fill="#00ff00"/><rect x="930" y="598" width="2" height="1" fill="#ff00ff"/><rect x="831" y="594" width="1" height="1" fill="#00ff00"/><rect x="883" y="598" width="4" height="1" fill="#ff0000"/><rect x="997" y="595" width="2" height="1" fill="#ff0000"/><rect x="889" y="594" width="4" height="1" fill="#00ff00"/><rect x="927" y="596" width="1" height="1" fill="#0000ff"/><rect x="808" y="597" width="1" height="1" fill="#00ff00"/><rect x="808" y="596" width="2" height="1" fill="#00ffff"/><rect x="957" y="596" width="4" height="1" fill="#ffc0cb"/><rect x="948" y="599" width="1" height="1" fill="#ff00ff"/><rect x="978" y="599" width="4" height="1" fill="#ff0000"/><rect x="905" y="599" width="2" height="1" fill="#ff00ff"/><rect x="882" y="597" width="4" height="1" fill="#00ff00"/><rect x="838" y="594" width="3" height="1" fill="#00ffff"/><rect x="778" y="600" width="1" height="1" fill="#ffc0cb"/><rect x="852" y="597" width="2" height="1" fill="#ff00ff"/><rect x="898" y="595" width="2" height="1" fill="#ff0000"/><rect x="877" y="595" width="1" height="1" fill="#ffc0cb"/><rect x="821" y="597" width="2" height="1" fill="#00ffff"/><rect x="901" y="599" width="1" height="1" fill="#ff0000"/><rect x="905" y="594" width="1" height="1" fill="#ffc0cb"/><rect x="855" y="594" width="2" height="1" fill="#0000ff"/><rect x="965" y="600" width="4" height="1" fill="#ff00ff"/><rect x="838" y="596" width="4" height="1" fill="#ff00ff"/><rect x="977" y="599" width="4" height="1" fill="#ff00ff"/><rect x="784" y="598" width="4" height="1" fill="#ff00ff"/><rect x="803" y="594" width="2" height="1" fill="#ff00ff"/><rect x="821" y="595" width="2" height="1" fill="#ffc0cb"/><rect x="983" y="594" width="2" height="1" fill="#ff00ff"/><rect x="823" y="594" width="4" height="1" fill="#00ff00"/><rect x="914" y="600" width="4" height="1" fill="#ff00ff"/><rect x="880" y="595" width="4" height="1" fill="#ff00ff"/><rect x="992" y="600" width="2" height="1" fill="#ff00ff"/><rect x="776" y="594" width="4" height="1" fill="#00ffff"/><rect x="986" y="597" width="1" height="1" fill="#ff0000"/><rect x="866" y="599" width="3" height="1" fill="#ff0000"/><rect x="951" y="598" width="1" height="1" fill="#0000ff"/><rect x="796" y="594" width="3" height="1" fill="#ff00ff"/><rect x="936" y="598" width="4" height="1" fill="#ff00ff"/><rect x="776" y="596" width="4" height="1" fill="#00ff00"/><rect x="766" y="597" width="2" height="1" fill="#0000ff"/><rect x="812" y="600" width="1" height="1" fill="#ffc0cb"/><rect x="886" y="595" width="2" height="1" fill="#00ff00"/><rect x="873" y="594" width="4" height="1" fill="#ff00ff"/><rect x="786" y="597" width="2" height="1" fill="#ffc0cb"/><rect x="797" y="596" width="4" height="1" fill="#00ff00"/><rect x="792" y="598" width="3" height="1" fill="#ff0000"/><rect x="934" y="594" width="1" height="1" fill="#ff00ff"/><rect x="990" y="597" width="3" height="1" fill="#00ff00"/><rect x="949" y="596" width="2" height="1" fill="#ffc0cb"/><rect x="870" y="596" width="2" height="1" fill="#ff00ff"/><rect x="802" y="595" width="1" height="1" fill="#ff0000"/><rect x="867" y="598" width="2" height="1" fill="#00ff00"/><rect x="935" y="597" width="1" height="1" fill="#ff0000"/><rect x="926" y="598" width="2" height="1" fill="#0000ff"/><rect x="807" y="598" width="4" height="1" fill="#ff00ff"/><rect x="860" y="596" width="3" height="1" fill="#ffc0cb"/><rect x="792" y="599" width="1" height="1" fill="#00ffff"/><rect x="974" y="598" width="3" height="1" fill="#ff0000"/><rect x="816" y="596" width="3" height="1" fill="#00ff00"/><rect x="773" y="596" width="1" height="1" fill="#00ffff"/><rect x="932" y="596" width="2" height="1" fill="#00ff00"/><rect x="919" y="594" width="3" height="1" fill="#ff0000"/><rect x="863" y="596" width="4" height="1" fill="#00ffff"/><rect x="831" y="597" width="2" height="1" fill="#ffc0cb"/><rect x="943" y="599" width="2" height="1" fill="#00ff00"/><rect x="943" y="597" width="4" height="1" fill="#00ff00"/><rect x="910" y="597" width="2" height="1" fill="#ff0000"/><rect x="929" y="595" width="3" height="1" fill="#ff00ff"/><rect x="994" y="600" width="1" height="1" fill="#0000ff"/><rect x="804" y="594" width="3" height="1" fill="#00ff00"/><rect x="416" y="601" width="585" height="5" fill="#7fffd4"/></g><path d="M409.5 115V610 M418 619.5H999" stroke="#000" stroke-width="1" shape-rendering="crispEdges"/><path d="M401 604.5H409M405 585.5H409M405 567.5H409M405 549.5H409M405 531.5H409M401 512.5H409M405 494.5H409M405 476.5H409M405 458.5H409M405 439.5H409M401 421.5H409M405 403.5H409M405 384.5H409M405 366.5H409M405 348.5H409M401 330.5H409M405 311.5H409M405 293.5H409M405 275.5H409M405 257.5H409M401 238.5H409M405 220.5H409M405 202.5H409M405 184.5H409M405 165.5H409M401 147.5H409M405 129.5H409M418.5 620V627M441.5 620V623M464.5 620V623M487.5 620V623M510.5 620V623M533.5 620V627M556.5 620V623M579.5 620V623M602.5 620V623M625.5 620V623M648.5 620V627M671.5 620V623M694.5 620V623M717.5 620V623M740.5 620V623M763.5 620V627M786.5 620V623M809.5 620V623M832.5 620V623M855.5 620V623M878.5 620V627M901.5 620V623M924.5 620V623M947.5 620V623M970.5 620V623M993.5 620V627" stroke="#000" stroke-width="1" shape-rendering="crispEdges"/></svg>
<div class="t" style="left:388.49px;top:599.33px;font-size:12.6px;color:#000;transform:scaleX(1.1276);transform-origin:right;letter-spacing:0px;">0</div>
<div class="t" style="left:377.98px;top:507.33px;font-size:12.6px;color:#000;transform:scaleX(1.1277);transform-origin:right;letter-spacing:0px;">0.5</div>
<div class="t" style="left:388.49px;top:416.33px;font-size:12.6px;color:#000;transform:scaleX(1.1276);transform-origin:right;letter-spacing:0px;">1</div>
<div class="t" style="left:377.98px;top:325.33px;font-size:12.6px;color:#000;transform:scaleX(1.1277);transform-origin:right;letter-spacing:0px;">1.5</div>
<div class="t" style="left:388.49px;top:233.33px;font-size:12.6px;color:#000;transform:scaleX(1.1276);transform-origin:right;letter-spacing:0px;">2</div>
<div class="t" style="left:377.98px;top:142.33px;font-size:12.6px;color:#000;transform:scaleX(1.1277);transform-origin:right;letter-spacing:0px;">2.5</div>
<div class="t" style="left:415.00px;top:632.33px;font-size:12.6px;color:#000;transform:scaleX(1.1276);transform-origin:center;letter-spacing:0px;">0</div>
<div class="t" style="left:522.99px;top:632.33px;font-size:12.6px;color:#000;transform:scaleX(1.1276);transform-origin:center;letter-spacing:0px;">500</div>
<div class="t" style="left:634.48px;top:632.33px;font-size:12.6px;color:#000;transform:scaleX(1.1276);transform-origin:center;letter-spacing:0px;">1000</div>
<div class="t" style="left:749.48px;top:632.33px;font-size:12.6px;color:#000;transform:scaleX(1.1276);transform-origin:center;letter-spacing:0px;">1500</div>
<div class="t" style="left:864.48px;top:632.33px;font-size:12.6px;color:#000;transform:scaleX(1.1276);transform-origin:center;letter-spacing:0px;">2000</div>
<div class="t" style="left:979.48px;top:632.33px;font-size:12.6px;color:#000;transform:scaleX(1.1276);transform-origin:center;letter-spacing:0px;">2500</div>
<div class="t" style="left:681.58px;top:647.48px;font-size:14.2px;font-weight:bold;color:#000;transform:scaleX(1.0194);transform-origin:center;letter-spacing:0px;">Time [s]</div>
<div style="left:343px;top:362.2px;width:0;height:0"><div class="t" style="position:absolute;left:0;top:0;transform:translate(-50%,-50%) rotate(-90deg)"><span style="display:inline-block;font-size:14.4px;font-weight:bold;transform:scaleX(1.06)">A(t) [a.u.]</span></div></div>
</body></html>
